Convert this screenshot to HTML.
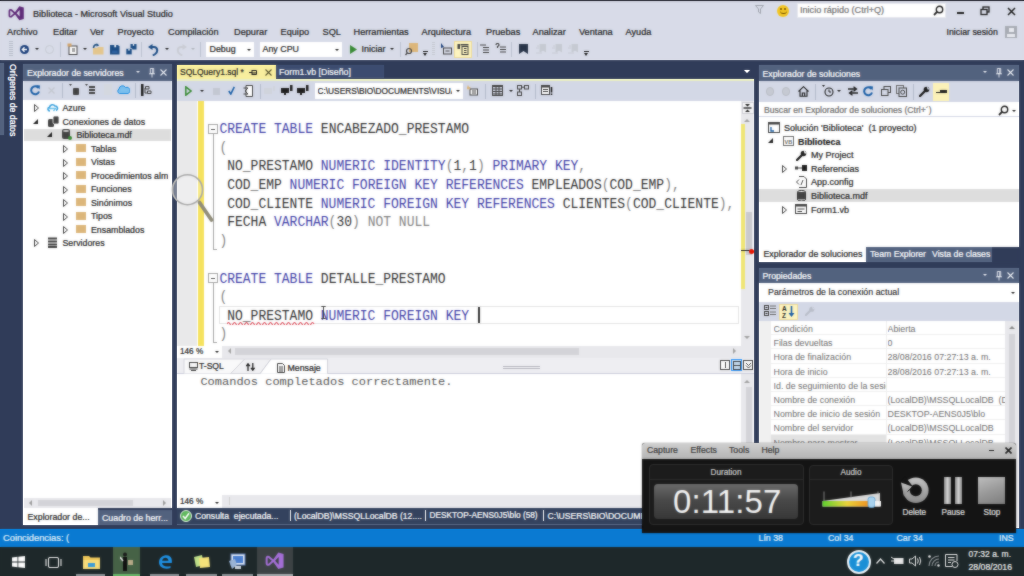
<!DOCTYPE html>
<html><head><meta charset="utf-8">
<style>
*{margin:0;padding:0;box-sizing:border-box}
html,body{width:1024px;height:576px;overflow:hidden;background:#303c59;font-family:"Liberation Sans",sans-serif}
.a{position:absolute}
#top{left:0;top:0;width:1024px;height:60px;background:#d8dbe8}
#topline{left:0;top:0;width:1024px;height:1.2px;background:#1c1c26}
#status{left:0;top:528px;width:1024px;height:19px;background:#007acc}
#taskbar{left:0;top:547px;width:1024px;height:29px;background:#1e272c}
#lefttab{left:3px;top:64px;width:16px;height:150px;background:#364e6f}
#srv{left:23px;top:64px;width:149px;height:461px;background:#fff}
#srvhdr{left:23px;top:64px;width:149px;height:16px;background:#53627f}
#srvtb{left:23px;top:80px;width:149px;height:20px;background:#d3d8e6}
#tab1{left:177px;top:65px;width:99px;height:14px;background:#fff29d}
#tab2{left:276px;top:65px;width:76px;height:14px;background:#364e6f}
#edline{left:177px;top:79px;width:577px;height:2px;background:#fff29d}
#edtb{left:177px;top:81px;width:577px;height:20px;background:#d3d8e6}
#ed{left:177px;top:101px;width:577px;height:426px;background:#fff}
#sol{left:759px;top:65px;width:261px;height:198px;background:#fff}
#prop{left:759px;top:267px;width:261px;height:260px;background:#f5f5f5}
.t{white-space:pre;line-height:1;-webkit-text-stroke:0.2px currentColor}
.menu{top:28px;font-size:9.2px;color:#1e1e1e}
.dd{position:absolute;width:0;height:0;border-style:solid;border-width:2.6px 2.6px 0;border-color:#1e1e1e transparent transparent}
.sep{top:42px;width:1px;height:15px;background:#bcc2cf}
.row{font-size:8.8px;color:#1e1e1e;margin-top:0.7px}
.trd{position:absolute;width:0;height:0;border-style:solid;border-width:0 0 5px 5px;border-color:transparent transparent #1e1e1e transparent}
.fold{position:absolute;left:76px;width:10px;height:8px;background:#dcb67a}
.code{font-family:"Liberation Mono",monospace;font-size:13px;line-height:15px;color:#303030;white-space:pre;transform:scaleY(1.08);transform-origin:0 11px;margin-top:1.3px}
.kw{color:#3e3ea6}
.gr{color:#808080}
.fb{position:absolute;width:10px;height:9.5px;border:1px solid #a5a5a5;background:#fff}
.fb::after{content:"";position:absolute;left:2px;top:3.5px;width:4px;height:1.2px;background:#555}
.mono2{font-family:"Liberation Mono",monospace;font-size:12px;line-height:14px;color:#555;white-space:pre;transform:scaleY(0.87);transform-origin:0 11px}
.qs{font-size:8.65px;color:#fff;margin-top:1px}
.pr{height:14.2px;border-bottom:1px solid #f0f0f0;position:relative;white-space:pre;font-size:8.85px;color:#6d6d6d;line-height:13px}
.pr span:first-child{position:absolute;left:3px;top:2px;width:112px;overflow:hidden}
.pr span:last-child{position:absolute;left:117px;top:2px;width:117px;overflow:hidden}
.sb{top:533.5px;font-size:8.8px;color:#e6f2fa}
.cm{top:446px;font-size:8.7px;color:#3a3a3a}
.cl{top:508.5px;font-size:8.2px;color:#e0e0e0}
</style></head><body><div id="wrap" style="position:absolute;left:0;top:0;width:1024px;height:576px;overflow:hidden">
<div class="a" id="top"></div>
<div class="a" id="topline"></div>
<!-- TITLE BAR -->
<svg class="a" style="left:8px;top:6px" width="17" height="15" viewBox="0 0 17 15"><path d="M7 7.3 L3.3 4 Q1.4 3.4 1.4 5.2 V9.4 Q1.4 11.2 3.3 10.6 Z" fill="none" stroke="#5f2a78" stroke-width="1.7" stroke-linejoin="round"/><path d="M6.2 7.3 L11.3 0.3 L15.8 1.6 V13 L11.3 14.3 Z M11.6 4 L8.6 7.3 L11.6 10.6 Z" fill="#5f2a78" fill-rule="evenodd"/></svg>
<div class="a t" style="left:33px;top:9.5px;font-size:9.1px;color:#1e1e1e">Biblioteca - Microsoft Visual Studio</div>
<svg class="a" style="left:755px;top:5px" width="9" height="9" viewBox="0 0 9 9"><path d="M0.5 0.5 H8.5 L5.5 4 V8.5 L3.5 7 V4 Z" fill="none" stroke="#a0a4ad" stroke-width="1"/></svg>
<div class="a" style="left:777px;top:5px;width:12px;height:12px;border-radius:6px;background:#f3c623"></div>
<div class="a" style="left:780px;top:8px;width:2px;height:2px;background:#6b4b00;border-radius:1px"></div>
<div class="a" style="left:784px;top:8px;width:2px;height:2px;background:#6b4b00;border-radius:1px"></div>
<div class="a" style="left:779.5px;top:9px;width:7px;height:5px;border-bottom:1.3px solid #6b4b00;border-radius:0 0 4px 4px"></div>
<div class="a" style="left:797px;top:3px;width:149px;height:15px;background:#fff;border:1px solid #e6e8ee"></div>
<div class="a t" style="left:800px;top:6px;font-size:9.1px;color:#717171">Inicio rápido (Ctrl+Q)</div>
<svg class="a" style="left:933px;top:5px" width="11" height="11" viewBox="0 0 11 11"><circle cx="6.5" cy="4.5" r="3.2" fill="none" stroke="#1e1e1e" stroke-width="1.4"/><path d="M4.3 6.7 L1 10" stroke="#1e1e1e" stroke-width="1.8"/></svg>
<div class="a" style="left:957px;top:12px;width:7px;height:2px;background:#1e1e1e"></div>
<svg class="a" style="left:980px;top:6px" width="10" height="10" viewBox="0 0 10 10"><rect x="3" y="1" width="6" height="5" fill="none" stroke="#1e1e1e" stroke-width="1.3"/><rect x="1" y="3.5" width="6" height="5" fill="#d8dbe8" stroke="#1e1e1e" stroke-width="1.3"/></svg>
<svg class="a" style="left:1007px;top:7px" width="9" height="9" viewBox="0 0 9 9"><path d="M1 1 L8 8 M8 1 L1 8" stroke="#1e1e1e" stroke-width="1.5"/></svg>
<!-- MENU -->
<div class="a t menu" style="left:7px">Archivo</div>
<div class="a t menu" style="left:53px">Editar</div>
<div class="a t menu" style="left:90px">Ver</div>
<div class="a t menu" style="left:117.5px">Proyecto</div>
<div class="a t menu" style="left:168px">Compilación</div>
<div class="a t menu" style="left:234px">Depurar</div>
<div class="a t menu" style="left:280.5px">Equipo</div>
<div class="a t menu" style="left:322.5px">SQL</div>
<div class="a t menu" style="left:353.5px">Herramientas</div>
<div class="a t menu" style="left:421.5px">Arquitectura</div>
<div class="a t menu" style="left:486px">Pruebas</div>
<div class="a t menu" style="left:532.5px">Analizar</div>
<div class="a t menu" style="left:579px">Ventana</div>
<div class="a t menu" style="left:625.5px">Ayuda</div>
<div class="a t" style="left:946.5px;top:28px;font-size:8.8px;color:#1e1e1e">Iniciar sesión</div>
<div class="a" style="left:1005px;top:26px;width:12px;height:12px;background:#a7abb3"></div>
<div class="a" style="left:1008.5px;top:27.5px;width:5px;height:4.5px;background:#e8eaef"></div>
<div class="a" style="left:1007px;top:33.5px;width:8px;height:3.5px;background:#e8eaef"></div>
<!-- TOOLBAR -->
<div class="a" style="left:9px;top:41px;width:4px;height:15px;background:repeating-linear-gradient(#b9bfcc 0 1px,transparent 1px 2px)"></div>
<div class="a" style="left:19.5px;top:44.5px;width:9.5px;height:9.5px;border-radius:5px;background:#1b3f7a"></div>
<svg class="a" style="left:20px;top:45px" width="9" height="9" viewBox="0 0 9 9"><path d="M7 4.5 H2.5 M4.5 2.3 L2.3 4.5 L4.5 6.7" stroke="#fff" stroke-width="1.3" fill="none"/></svg>
<div class="a dd" style="left:35px;top:48px"></div>
<div class="a" style="left:45px;top:44.5px;width:9px;height:9px;border-radius:5px;border:1.5px solid #c6cad2"></div>
<div class="a sep" style="left:60px"></div>
<svg class="a" style="left:67px;top:43px" width="11" height="12" viewBox="0 0 11 12"><rect x="2" y="3" width="8" height="8.5" fill="#fff" stroke="#424242" stroke-width="1"/><rect x="0.5" y="0.5" width="4" height="3" fill="#d2a36a"/><path d="M5 6 H8 M5 8 H8" stroke="#424242"/></svg>
<div class="a dd" style="left:83px;top:48px"></div>
<svg class="a" style="left:92px;top:43px" width="13" height="13" viewBox="0 0 13 13"><path d="M1 5 H5 L6 4 H11.5 V11.5 H1 Z" fill="#e3c58c"/><path d="M1.5 5 C1.5 2 4 0.8 6 2.2" stroke="#1f4f7f" stroke-width="1.6" fill="none"/><path d="M4.8 0.3 L7.2 2.6 L4.5 3.6 Z" fill="#1f4f7f"/></svg>
<svg class="a" style="left:110px;top:44.5px" width="9.5" height="10" viewBox="0 0 9.5 10"><path d="M0 0 H8 L9.5 1.5 V9.5 H0 Z" fill="#1b4c84"/><rect x="4.3" y="0" width="1.8" height="2.3" fill="#e8eef6"/><rect x="2" y="5.5" width="5.5" height="2.5" fill="#2f62a0"/></svg>
<svg class="a" style="left:126px;top:44px" width="11" height="11" viewBox="0 0 11 11"><path d="M4.5 0 H10.5 V5.5 H4.5 Z" fill="#1b4c84"/><rect x="6.8" y="0" width="1.4" height="1.8" fill="#e8eef6"/><path d="M0 4.5 H6 V10.7 H0 Z" fill="#1b4c84" stroke="#d8dbe8" stroke-width="0.6"/><rect x="2.3" y="4.8" width="1.4" height="1.8" fill="#e8eef6"/></svg>
<div class="a sep" style="left:141px"></div>
<svg class="a" style="left:148px;top:43.5px" width="11" height="12" viewBox="0 0 11 12"><path d="M0 3 L4.5 0 V6 Z" fill="#1b4c84"/><path d="M4 3 H6 C9.8 3 10.2 8 7.2 10 L4.8 11.5" stroke="#1b4c84" stroke-width="2" fill="none"/></svg>
<div class="a dd" style="left:165px;top:48px"></div>
<svg class="a" style="left:175.5px;top:43.5px" width="11" height="12" viewBox="0 0 11 12"><path d="M11 3 L6.5 0 V6 Z" fill="#c9ccd4"/><path d="M7 3 H5 C1.2 3 0.8 8 3.8 10 L6.2 11.5" stroke="#c9ccd4" stroke-width="2" fill="none"/></svg>
<div class="a dd" style="left:191px;top:48px;border-top-color:#b0b4bc"></div>
<div class="a sep" style="left:200px"></div>
<div class="a" style="left:206px;top:42px;width:48px;height:15px;background:#fff"></div>
<div class="a t" style="left:209.5px;top:44.5px;font-size:8.9px;color:#1e1e1e">Debug</div>
<div class="a dd" style="left:247px;top:49px"></div>
<div class="a" style="left:260px;top:42px;width:82px;height:15px;background:#fff"></div>
<div class="a t" style="left:262.5px;top:44.5px;font-size:8.9px;color:#1e1e1e">Any CPU</div>
<div class="a dd" style="left:335px;top:49px"></div>
<svg class="a" style="left:350px;top:44.5px" width="7" height="9" viewBox="0 0 7 9"><path d="M0 0 L7 4.5 L0 9 Z" fill="#388a34"/></svg>
<div class="a t" style="left:361.5px;top:44.5px;font-size:9px;color:#1e1e1e">Iniciar</div>
<div class="a dd" style="left:390px;top:48px"></div>
<div class="a sep" style="left:400px"></div>
<svg class="a" style="left:405px;top:43px" width="13" height="13" viewBox="0 0 13 13"><rect x="4" y="0" width="9" height="9" fill="#dcb67a"/><circle cx="4" cy="8" r="2.5" fill="none" stroke="#424242" stroke-width="1.2"/><path d="M2.3 9.8 L0.5 12" stroke="#424242" stroke-width="1.3"/></svg>
<div class="a" style="left:423px;top:51px;width:5px;height:1px;background:#1e1e1e"></div>
<div class="a dd" style="left:423px;top:53px;border-width:3px 2.5px 0"></div>
<div class="a" style="left:432px;top:42px;width:3px;height:14px;background:repeating-linear-gradient(#c6cad2 0 1px,transparent 1px 2px)"></div>
<svg class="a" style="left:440px;top:43px" width="12" height="12" viewBox="0 0 12 12"><path d="M1 0 L4 4 L1 5 Z" fill="#1b3f7a"/><rect x="3.5" y="5" width="8" height="6" fill="none" stroke="#424242"/><path d="M5.5 8 H9.5" stroke="#424242"/></svg>
<div class="a" style="left:454px;top:40.5px;width:18px;height:17px;background:#fdf4bf;border:1px solid #eedc9a"></div>
<svg class="a" style="left:457px;top:43px" width="12" height="12" viewBox="0 0 12 12"><rect x="0.5" y="1" width="2.5" height="5" fill="#424242"/><rect x="3.5" y="1" width="8" height="1.5" fill="#424242"/><rect x="5" y="3.5" width="6" height="8" fill="none" stroke="#424242"/><path d="M7 5.5 H9.5 M7 7.5 H9.5 M7 9.5 H9.5" stroke="#424242"/></svg>
<div class="a sep" style="left:477px"></div>
<svg class="a" style="left:480px;top:44px" width="10" height="10" viewBox="0 0 10 10"><path d="M0 1 H6 M3 3.5 H9 M3 6 H9 M3 8.5 H9" stroke="#424242" stroke-width="1"/></svg>
<svg class="a" style="left:495px;top:43px" width="12" height="11" viewBox="0 0 12 11"><path d="M1 2 Q1 0.5 2.5 0.5 Q4 0.5 4 2 Q4 3 2.5 3.5 V5" stroke="#424242" stroke-width="1.2" fill="none"/><path d="M5 4 H11 M5 6.5 H11 M5 9 H11" stroke="#424242"/></svg>
<div class="a sep" style="left:511px"></div>
<svg class="a" style="left:518.5px;top:43.5px" width="9" height="10" viewBox="0 0 9 10"><path d="M0 0 H9 V10 L4.5 7 L0 10 Z" fill="#283448"/></svg>
<svg class="a" style="left:536px;top:43.5px" width="10" height="11" viewBox="0 0 10 11"><path d="M4 0 H10 V8 L7 6 L4 8 Z M0 4 H3 M1 2 H3 M0 9 H6" stroke="#c6cad2" fill="#c6cad2"/></svg>
<svg class="a" style="left:552px;top:43.5px" width="10" height="11" viewBox="0 0 10 11"><path d="M4 0 H10 V8 L7 6 L4 8 Z M0 4 H3 M1 2 H3 M0 9 H6" stroke="#c6cad2" fill="#c6cad2"/></svg>
<svg class="a" style="left:568px;top:43.5px" width="10" height="11" viewBox="0 0 10 11"><path d="M4 0 H10 V8 L7 6 L4 8 Z M0 4 H3 M1 2 H3 M0 9 H6" stroke="#c6cad2" fill="#c6cad2"/></svg>
<div class="a" style="left:584px;top:51px;width:5px;height:1px;background:#1e1e1e"></div>
<div class="a dd" style="left:584px;top:53px;border-width:3px 2.5px 0"></div>

<!-- LEFT TAB -->
<div class="a" style="left:0;top:63px;width:4px;height:72px;background:#53627f"></div>
<div class="a t" style="left:17px;top:64px;font-size:8.8px;color:#e8ebf2;transform-origin:0 0;transform:rotate(90deg)">Orígenes de datos</div>
<!-- SERVER EXPLORER -->
<div class="a" style="left:23px;top:64px;width:148.7px;height:461px;background:#fff"></div>
<div class="a" style="left:23px;top:64px;width:149px;height:16.5px;background:#53627f"></div>
<div class="a t" style="left:27px;top:69px;font-size:8.7px;color:#fff">Explorador de servidores</div>
<div class="a dd" style="left:136px;top:71px;border-top-color:#e9ecf2;border-width:2.6px 2.6px 0"></div>
<svg class="a" style="left:148.5px;top:68px" width="6" height="10" viewBox="0 0 6 10"><path d="M1.3 0.5 H4.7 V5.5 H1.3 Z M0 5.8 H6 M3 5.8 V9.5" stroke="#e9ecf2" fill="none" stroke-width="0.9"/><path d="M3.4 1 V5" stroke="#e9ecf2" stroke-width="0.8"/></svg>
<svg class="a" style="left:160px;top:69px" width="7" height="7" viewBox="0 0 7 7"><path d="M0.5 0.5 L6.5 6.5 M6.5 0.5 L0.5 6.5" stroke="#e9ecf2" stroke-width="1.1"/></svg>
<div class="a" style="left:23px;top:80.5px;width:148.7px;height:19.5px;background:#d3d8e6"></div>
<svg class="a" style="left:30px;top:84px" width="11" height="12" viewBox="0 0 11 12"><path d="M8.5 4 A4 4 0 1 0 9 7.5" stroke="#1b5fa6" stroke-width="2" fill="none"/><path d="M6 1 L10 1.5 L9.5 5.5 Z" fill="#1b5fa6"/></svg>
<svg class="a" style="left:48px;top:87px" width="7" height="7" viewBox="0 0 7 7"><path d="M0.5 0.5 L6.5 6.5 M6.5 0.5 L0.5 6.5" stroke="#c3c7cf" stroke-width="1.3"/></svg>
<div class="a" style="left:62px;top:83px;width:1px;height:15px;background:#b4bbcb"></div>
<svg class="a" style="left:69px;top:84px" width="11" height="11" viewBox="0 0 11 11"><path d="M0 0 H3 L1.5 2 Z" fill="#424242"/><rect x="4" y="4" width="6" height="7" rx="1" fill="#424242"/></svg>
<svg class="a" style="left:85px;top:84px" width="11" height="11" viewBox="0 0 11 11"><path d="M0 0 H3 L1.5 2 Z" fill="#424242"/><path d="M4 3 H10 M4 6 H10 M4 9 H10" stroke="#424242" stroke-width="2"/></svg>
<svg class="a" style="left:104px;top:84px" width="8" height="11" viewBox="0 0 8 11"><rect x="0" y="0" width="8" height="11" fill="#d4d8df"/></svg>
<svg class="a" style="left:117px;top:85px" width="13" height="9" viewBox="0 0 13 9"><path d="M2.5 8.5 A2.5 2.5 0 0 1 2 4 A3.5 3.5 0 0 1 8.5 2.5 A3 3 0 0 1 11 8.5 Z" fill="#7cc0ee" stroke="#1b8be0" stroke-width="1"/></svg>
<div class="a" style="left:134.5px;top:83px;width:1px;height:15px;background:#b4bbcb"></div>
<svg class="a" style="left:141px;top:84px" width="11" height="12" viewBox="0 0 11 12"><rect x="0" y="0" width="2.5" height="12" fill="#1e1e1e"/><path d="M4.5 2.5 H8 V5 H4.5 Z M6.5 7 H10 V9.5 H6.5 Z M4 4 V9 H6.5" stroke="#424242" fill="none"/></svg>
<!-- tree -->
<svg class="a" style="left:34px;top:104px" width="5" height="8" viewBox="0 0 5 8"><path d="M0.5 0.5 L4.5 4 L0.5 7.5 Z" fill="none" stroke="#424242" stroke-width="1"/></svg>
<svg class="a" style="left:47px;top:103px" width="12" height="9" viewBox="0 0 12 9"><path d="M3 8 C0.5 8 0.3 4.8 2.5 4.3 C3 1.5 6.5 0.8 8 3 C10.5 2.8 11.5 6.5 9 7.5" fill="none" stroke="#3aa0dc" stroke-width="1.6"/><path d="M1.5 5.5 H8.5 L6.5 8.2" fill="none" stroke="#6cc0ea" stroke-width="1.3"/></svg>
<div class="a t row" style="left:62.5px;top:103px">Azure</div>
<div class="a trd" style="left:33px;top:118.5px"></div>
<svg class="a" style="left:48px;top:116px" width="11" height="11" viewBox="0 0 11 11"><rect x="0" y="3" width="6" height="8" rx="1.5" fill="#424242"/><rect x="5" y="0" width="6" height="8" rx="1.5" fill="#424242" stroke="#fff" stroke-width="0.8"/></svg>
<div class="a t row" style="left:62.5px;top:117px">Conexiones de datos</div>
<div class="a" style="left:24px;top:128.5px;width:147px;height:12px;background:#dddddd"></div>
<div class="a trd" style="left:47px;top:132px"></div>
<svg class="a" style="left:62px;top:129px" width="10" height="11" viewBox="0 0 10 11"><rect x="0" y="0" width="8" height="10" rx="2" fill="#424242"/><ellipse cx="4" cy="2" rx="3" ry="1" fill="#ccc"/><circle cx="8" cy="9" r="2" fill="#388a34"/></svg>
<div class="a t row" style="left:76.5px;top:130px">Biblioteca.mdf</div>
<svg class="a" style="left:62.5px;top:145px" width="5" height="8" viewBox="0 0 5 8"><path d="M0.5 0.5 L4.5 4 L0.5 7.5 Z" fill="none" stroke="#424242" stroke-width="1"/></svg><div class="a fold" style="top:144px"></div><div class="a t row" style="left:91px;top:144px">Tablas</div>
<svg class="a" style="left:62.5px;top:158.5px" width="5" height="8" viewBox="0 0 5 8"><path d="M0.5 0.5 L4.5 4 L0.5 7.5 Z" fill="none" stroke="#424242" stroke-width="1"/></svg><div class="a fold" style="top:157.5px"></div><div class="a t row" style="left:91px;top:157.5px">Vistas</div>
<svg class="a" style="left:62.5px;top:172px" width="5" height="8" viewBox="0 0 5 8"><path d="M0.5 0.5 L4.5 4 L0.5 7.5 Z" fill="none" stroke="#424242" stroke-width="1"/></svg><div class="a fold" style="top:171px"></div><div class="a t row" style="left:91px;top:171px;width:77px;overflow:hidden">Procedimientos almacenados</div>
<svg class="a" style="left:62.5px;top:185.5px" width="5" height="8" viewBox="0 0 5 8"><path d="M0.5 0.5 L4.5 4 L0.5 7.5 Z" fill="none" stroke="#424242" stroke-width="1"/></svg><div class="a fold" style="top:184.5px"></div><div class="a t row" style="left:91px;top:184.5px">Funciones</div>
<svg class="a" style="left:62.5px;top:199px" width="5" height="8" viewBox="0 0 5 8"><path d="M0.5 0.5 L4.5 4 L0.5 7.5 Z" fill="none" stroke="#424242" stroke-width="1"/></svg><div class="a fold" style="top:198px"></div><div class="a t row" style="left:91px;top:198px">Sinónimos</div>
<svg class="a" style="left:62.5px;top:212.5px" width="5" height="8" viewBox="0 0 5 8"><path d="M0.5 0.5 L4.5 4 L0.5 7.5 Z" fill="none" stroke="#424242" stroke-width="1"/></svg><div class="a fold" style="top:211.5px"></div><div class="a t row" style="left:91px;top:211.5px">Tipos</div>
<svg class="a" style="left:62.5px;top:226px" width="5" height="8" viewBox="0 0 5 8"><path d="M0.5 0.5 L4.5 4 L0.5 7.5 Z" fill="none" stroke="#424242" stroke-width="1"/></svg><div class="a fold" style="top:225px"></div><div class="a t row" style="left:91px;top:225px">Ensamblados</div>
<svg class="a" style="left:34px;top:239px" width="5" height="8" viewBox="0 0 5 8"><path d="M0.5 0.5 L4.5 4 L0.5 7.5 Z" fill="none" stroke="#424242" stroke-width="1"/></svg>
<svg class="a" style="left:48px;top:237px" width="9" height="11" viewBox="0 0 9 11"><path d="M0 1.5 H9 M0 4.5 H9 M0 7.5 H9 M0 10 H9" stroke="#424242" stroke-width="2"/></svg>
<div class="a t row" style="left:62.5px;top:238px">Servidores</div>
<!-- h scrollbar -->
<div class="a" style="left:24px;top:498px;width:147px;height:10px;background:#e8e8ec"></div>
<div class="a" style="left:38px;top:500px;width:95px;height:6px;background:#d3d3d8"></div>
<div class="a" style="left:29px;top:500px;width:0;height:0;border-style:solid;border-width:3px 3px 3px 0;border-color:transparent #9a9a9a transparent transparent"></div>
<div class="a" style="left:163px;top:500px;width:0;height:0;border-style:solid;border-width:3px 0 3px 3px;border-color:transparent transparent transparent #9a9a9a"></div>
<!-- bottom tabs -->
<div class="a" style="left:23px;top:508px;width:149px;height:17px;background:#303c59"></div>
<div class="a" style="left:23px;top:508px;width:75px;height:17px;background:#fff"></div>
<div class="a t" style="left:27.5px;top:513px;font-size:8.8px;color:#1e1e1e">Explorador de...</div>
<div class="a" style="left:98px;top:509.5px;width:74px;height:15.5px;background:#53627f"></div>
<div class="a t" style="left:102px;top:513.5px;font-size:8.8px;color:#fff">Cuadro de herr...</div>

<!-- DOC TABS -->
<div class="a" style="left:177px;top:64.5px;width:99px;height:14.5px;background:#f8ee9e"></div>
<div class="a t" style="left:180px;top:67.5px;font-size:8.5px;color:#1e1e1e">SQLQuery1.sql *</div>
<svg class="a" style="left:249px;top:69px" width="9" height="7" viewBox="0 0 9 7"><path d="M0 3.5 H3 M3 1 V6 M3 1.5 H7.5 V5.5 H3 M3 4 H7.5" stroke="#1e1e1e" fill="none" stroke-width="1"/></svg>
<svg class="a" style="left:265px;top:68.5px" width="7" height="7" viewBox="0 0 7 7"><path d="M0.5 0.5 L6.5 6.5 M6.5 0.5 L0.5 6.5" stroke="#5a5630" stroke-width="1.1"/></svg>
<div class="a" style="left:276px;top:64.5px;width:108px;height:13.5px;background:#3d4d70"></div>
<div class="a t" style="left:279px;top:67.5px;font-size:8.8px;color:#fff">Form1.vb [Diseño]</div>
<div class="a dd" style="left:744px;top:70px;border-top-color:#fff;border-width:3.5px 3.5px 0"></div>
<div class="a" style="left:177px;top:79px;width:577px;height:2px;background:#e9eec3"></div>
<!-- EDITOR TOOLBAR -->
<div class="a" style="left:177px;top:81px;width:577px;height:20px;background:#d3d8e6"></div>
<svg class="a" style="left:185px;top:86px" width="7" height="10" viewBox="0 0 7 10"><path d="M0.8 0.8 L6 5 L0.8 9.2 Z" fill="none" stroke="#388a34" stroke-width="1.5"/></svg>
<div class="a dd" style="left:200px;top:90px"></div>
<div class="a" style="left:213px;top:87.5px;width:7px;height:7px;background:#c3c8d2"></div>
<svg class="a" style="left:228px;top:86px" width="7" height="9" viewBox="0 0 7 9"><path d="M0.8 5 L2.8 8 L6.3 0.8" stroke="#1b5fa6" stroke-width="1.6" fill="none"/></svg>
<svg class="a" style="left:243px;top:85px" width="10" height="12" viewBox="0 0 10 12"><path d="M3 0.5 H9.5 V11.5 H3 Z" fill="#fff" stroke="#424242"/><path d="M0.5 3 L5 3 L2 6 L5 9 H0.5" stroke="#424242" fill="none"/></svg>
<div class="a" style="left:259.5px;top:84px;width:1px;height:15px;background:#b4bbcb"></div>
<svg class="a" style="left:264px;top:86px" width="12" height="10" viewBox="0 0 12 10"><rect x="0" y="2" width="8" height="6" fill="#d0d4dc"/><rect x="9" y="0" width="2" height="5" fill="#d0d4dc"/></svg>
<svg class="a" style="left:281px;top:85px" width="12" height="11" viewBox="0 0 12 11"><rect x="0" y="3" width="8" height="5" fill="#1e1e1e"/><rect x="3" y="8" width="2" height="2" fill="#1e1e1e"/><rect x="9" y="0" width="2.5" height="6" fill="#1e1e1e"/></svg>
<svg class="a" style="left:297px;top:85px" width="12" height="11" viewBox="0 0 12 11"><rect x="0" y="3" width="8" height="5" fill="#1e1e1e"/><rect x="3" y="8" width="2" height="2" fill="#1e1e1e"/><rect x="9" y="0" width="2.5" height="6" fill="#1e1e1e"/></svg>
<div class="a" style="left:315px;top:83px;width:148px;height:16px;background:#fff"></div>
<div class="a t" style="left:317.5px;top:86.5px;font-size:8.3px;color:#1e1e1e;width:134px;overflow:hidden">C:\USERS\BIO\DOCUMENTS\VISUAL</div>
<div class="a dd" style="left:456px;top:90px"></div>
<svg class="a" style="left:467px;top:85px" width="11" height="11" viewBox="0 0 11 11"><rect x="3" y="4" width="7.5" height="6" fill="#fff" stroke="#424242"/><path d="M1 0 L2 2 L4 2 L2.5 3.2 L3 5 L1 4 L-1 5" fill="#dcb67a"/><path d="M5 6 H9 M5 8 H9" stroke="#424242"/></svg>
<div class="a" style="left:485px;top:84px;width:1px;height:15px;background:#b4bbcb"></div>
<svg class="a" style="left:492px;top:85px" width="11" height="11" viewBox="0 0 11 11"><rect x="0.5" y="1.5" width="10" height="9" fill="none" stroke="#424242"/><path d="M0.5 4 H10.5 M0.5 6.5 H10.5 M0.5 9 H10.5 M4 1.5 V10.5 M7 1.5 V10.5" stroke="#424242"/><rect x="0" y="0" width="11" height="2" fill="#424242"/></svg>
<div class="a dd" style="left:509px;top:90px"></div>
<svg class="a" style="left:517px;top:85px" width="12" height="11" viewBox="0 0 12 11"><rect x="0.5" y="0.5" width="4" height="3.5" fill="none" stroke="#424242"/><rect x="7.5" y="0.5" width="4" height="3.5" fill="none" stroke="#424242"/><rect x="0.5" y="7" width="4" height="3.5" fill="none" stroke="#424242"/><path d="M2.5 4 V7 M4.5 2.2 H7.5" stroke="#424242"/></svg>
<div class="a" style="left:534.5px;top:84px;width:1px;height:15px;background:#b4bbcb"></div>
<svg class="a" style="left:541px;top:85px" width="12" height="11" viewBox="0 0 12 11"><rect x="0.5" y="0.5" width="8" height="9" fill="#fff" stroke="#424242"/><rect x="0.5" y="0.5" width="8" height="2" fill="#424242"/><path d="M2 4.5 H7 M2 6.5 H7" stroke="#424242"/><path d="M10.5 2 V7.5 M10.5 8.5 V10" stroke="#1e1e1e" stroke-width="1.6"/></svg>
<!-- EDITOR BODY -->
<div class="a" style="left:177px;top:101px;width:564px;height:244.5px;background:#fff"></div>
<div class="a" style="left:177px;top:101px;width:20px;height:244.5px;background:#e9e9ea"></div>
<div class="a" style="left:198.2px;top:101px;width:6px;height:244.5px;background:#f5e25e"></div>
<!-- fold boxes and outline lines -->
<div class="a fb" style="left:208px;top:124.3px"></div>
<div class="a" style="left:212.5px;top:133.5px;width:1px;height:115.5px;background:#a5a5a5"></div>
<div class="a" style="left:212.5px;top:249px;width:4.5px;height:1px;background:#a5a5a5"></div>
<div class="a fb" style="left:208px;top:273px"></div>
<div class="a" style="left:212.5px;top:282.3px;width:1px;height:60px;background:#a5a5a5"></div>
<div class="a" style="left:212.5px;top:342px;width:4.5px;height:1px;background:#a5a5a5"></div>
<!-- current line box -->
<div class="a" style="left:218.5px;top:305.5px;width:520px;height:18px;border:1px solid #e4e4e4"></div>
<div class="a code" style="left:219.4px;top:121px"><span class="kw">CREATE</span> <span class="kw">TABLE</span> ENCABEZADO_PRESTAMO</div>
<div class="a code" style="left:219.4px;top:139.6px"><span class="gr">(</span></div>
<div class="a code" style="left:219.4px;top:158.2px"> NO_PRESTAMO <span class="kw">NUMERIC</span> <span class="kw">IDENTITY</span><span class="gr">(</span>1<span class="gr">,</span>1<span class="gr">)</span> <span class="kw">PRIMARY</span> <span class="kw">KEY</span><span class="gr">,</span></div>
<div class="a code" style="left:219.4px;top:176.8px"> COD_EMP <span class="kw">NUMERIC</span> <span class="kw">FOREIGN</span> <span class="kw">KEY</span> <span class="kw">REFERENCES</span> EMPLEADOS<span class="gr">(</span>COD_EMP<span class="gr">),</span></div>
<div class="a code" style="left:219.4px;top:195.4px"> COD_CLIENTE <span class="kw">NUMERIC</span> <span class="kw">FOREIGN</span> <span class="kw">KEY</span> <span class="kw">REFERENCES</span> CLIENTES<span class="gr">(</span>COD_CLIENTE<span class="gr">),</span></div>
<div class="a code" style="left:219.4px;top:214px"> FECHA <span class="kw">VARCHAR</span><span class="gr">(</span>30<span class="gr">)</span> <span class="gr">NOT NULL</span></div>
<div class="a code" style="left:219.4px;top:232.6px"><span class="gr">)</span></div>
<div class="a code" style="left:219.4px;top:270.4px"><span class="kw">CREATE</span> <span class="kw">TABLE</span> DETALLE_PRESTAMO</div>
<div class="a code" style="left:219.4px;top:289px"><span class="gr">(</span></div>
<div class="a code" style="left:219.4px;top:307.6px"> NO_PRESTAMO <span class="kw">NUMERIC</span> <span class="kw">FOREIGN</span> <span class="kw">KEY</span></div>
<div class="a code" style="left:219.4px;top:326.2px"><span class="gr">)</span></div>
<svg class="a" style="left:227px;top:321px" width="88" height="4" viewBox="0 0 88 4"><path d="M0 3 Q1.5 0 3 3 T6 3 T9 3 T12 3 T15 3 T18 3 T21 3 T24 3 T27 3 T30 3 T33 3 T36 3 T39 3 T42 3 T45 3 T48 3 T51 3 T54 3 T57 3 T60 3 T63 3 T66 3 T69 3 T72 3 T75 3 T78 3 T81 3 T84 3 T87 3" stroke="#e0505e" stroke-width="1.1" fill="none"/></svg>
<div class="a" style="left:478px;top:307px;width:1.6px;height:15.5px;background:#333"></div>
<svg class="a" style="left:321px;top:306px" width="5" height="13" viewBox="0 0 5 13"><path d="M0.3 0.5 H4.7 M2.5 0.5 V12.5 M0.3 12.5 H4.7" stroke="#333" stroke-width="0.9" fill="none"/></svg>
<!-- magnifier overlay -->
<svg class="a" style="left:170px;top:172px" width="46" height="52" viewBox="0 0 46 52"><circle cx="17.5" cy="17.7" r="15" fill="rgba(255,255,255,0.25)" stroke="#a8a8a8" stroke-width="1.6"/><path d="M29.5 30.5 L41.5 48" stroke="#8f8b78" stroke-width="3.8" stroke-linecap="round"/></svg>
<!-- vertical scrollbar -->
<div class="a" style="left:741px;top:101px;width:13px;height:244.5px;background:#e8e8ec"></div>
<div class="a" style="left:741.5px;top:101.5px;width:12px;height:12px;background:#f5f5f7;border:1px solid #d0d0d6"></div>
<svg class="a" style="left:743px;top:102.5px" width="9" height="10" viewBox="0 0 9 10"><path d="M0.5 5 H8.5" stroke="#222" stroke-width="1.4"/><path d="M2 1 H7 L4.5 3.6 Z M2 9 H7 L4.5 6.4 Z" fill="#222"/></svg>
<div class="a" style="left:744px;top:119px;width:0;height:0;border-style:solid;border-width:0 3.5px 3.5px;border-color:transparent transparent #a0a0a0"></div>
<div class="a" style="left:741px;top:124px;width:3.5px;height:165px;background:#efe574"></div>
<div class="a" style="left:745.5px;top:212px;width:6.5px;height:43px;background:#c9c9ce"></div>
<div class="a" style="left:741px;top:250px;width:10px;height:1.2px;background:#1e1e1e"></div>
<div class="a" style="left:749px;top:248.5px;width:5px;height:5px;border-radius:3px;background:#e51400"></div>
<div class="a" style="left:744px;top:336px;width:0;height:0;border-style:solid;border-width:3.5px 3.5px 0;border-color:#a0a0a0 transparent transparent"></div>
<!-- h scroll row -->
<div class="a" style="left:177px;top:345.5px;width:577px;height:12px;background:#e8e8ec"></div>
<div class="a" style="left:177px;top:345.5px;width:45px;height:12px;background:#fff"></div>
<div class="a t" style="left:180px;top:347.5px;font-size:8.2px;color:#1e1e1e">146 %</div>
<div class="a dd" style="left:215px;top:351px"></div>
<div class="a" style="left:228px;top:348px;width:0;height:0;border-style:solid;border-width:3.5px 3.5px 3.5px 0;border-color:transparent #a0a0a0 transparent transparent"></div>
<div class="a" style="left:234.5px;top:348px;width:344px;height:7px;background:#d3d3d8"></div>
<div class="a" style="left:733px;top:348px;width:0;height:0;border-style:solid;border-width:3.5px 0 3.5px 3.5px;border-color:transparent transparent transparent #a0a0a0"></div>
<!-- results tab strip -->
<div class="a" style="left:177px;top:357.5px;width:577px;height:16.5px;background:#eeeef2"></div>
<div class="a" style="left:177px;top:373px;width:577px;height:1px;background:#cccedb"></div>
<svg class="a" style="left:182px;top:358px" width="150" height="16" viewBox="0 0 150 16"><path d="M2 15.5 V1 H62.75 L48.7 15.5" fill="#f9f9fa" stroke="#d6d6dc"/><path d="M48.7 15.5 L62.75 1 H89 L78 15.5 Z" fill="#f1f1f4" stroke="#d6d6dc"/><path d="M78 15.8 L89 1 H145.6 V15.8" fill="#fff" stroke="#cfd0d8"/></svg>
<svg class="a" style="left:189px;top:362px" width="9" height="9" viewBox="0 0 9 9"><rect x="0.5" y="0.5" width="8" height="5" fill="none" stroke="#424242"/><path d="M0.5 7 H8.5 M2 8.5 H7" stroke="#424242"/></svg>
<div class="a t" style="left:199px;top:361.5px;font-size:8.6px;color:#1e1e1e">T-SQL</div>
<svg class="a" style="left:246px;top:362.5px" width="9" height="8" viewBox="0 0 9 8"><path d="M2 8 V1.2 M0.2 3.2 L2 0.8 L3.8 3.2 M6.8 0 V6.8 M5 4.8 L6.8 7.2 L8.6 4.8" stroke="#1e1e1e" stroke-width="1.3" fill="none"/></svg>
<svg class="a" style="left:276.5px;top:363px" width="8" height="10" viewBox="0 0 8 10"><path d="M0.5 0.5 H5.5 L7.5 2.5 V9.5 H0.5 Z" fill="#fff" stroke="#424242"/><path d="M2 4 H6 M2 6 H6 M2 8 H6" stroke="#424242"/></svg>
<div class="a t" style="left:287.5px;top:364px;font-size:8.8px;color:#1e1e1e">Mensaje</div>
<div class="a" style="left:503px;top:365.5px;width:37px;height:1px;background:#b8b8c0"></div>
<div class="a" style="left:503px;top:368px;width:37px;height:1px;background:#b8b8c0"></div>
<div class="a" style="left:720px;top:360px;width:10px;height:10px;border:1px solid #424242;background:#fff"></div>
<div class="a" style="left:724.5px;top:362px;width:1px;height:6px;background:#424242"></div>
<div class="a" style="left:731px;top:359px;width:11px;height:12px;background:#c5dcf0;border:1px solid #3399ff"></div>
<div class="a" style="left:732.5px;top:360.5px;width:8px;height:9px;border:1px solid #424242"></div>
<div class="a" style="left:733.5px;top:364.5px;width:6px;height:1px;background:#424242"></div>
<div class="a" style="left:743px;top:360px;width:10px;height:10px;border:1px solid #424242;background:#fff"></div>
<svg class="a" style="left:744.5px;top:361.5px" width="7" height="7" viewBox="0 0 7 7"><path d="M1 1 L3.5 3.5 L6 1 M1 3.5 L3.5 6 L6 3.5" stroke="#424242" fill="none"/></svg>
<!-- results body -->
<div class="a" style="left:177px;top:374px;width:577px;height:121px;background:#fff"></div>
<div class="a mono2" style="left:200.4px;top:374.5px">Comandos completados correctamente.</div>
<div class="a" style="left:741px;top:374px;width:13px;height:121px;background:#e8e8ec"></div>
<div class="a" style="left:744px;top:380px;width:0;height:0;border-style:solid;border-width:0 3.5px 3.5px;border-color:transparent transparent #a0a0a0"></div>
<div class="a" style="left:745.5px;top:387px;width:6.5px;height:100px;background:#d3d3d8"></div>
<!-- bottom zoom row -->
<div class="a" style="left:177px;top:495px;width:577px;height:12.5px;background:#e8e8ec"></div>
<div class="a" style="left:177px;top:495px;width:45px;height:12.5px;background:#fff"></div>
<div class="a t" style="left:180px;top:497.5px;font-size:8.2px;color:#1e1e1e">146 %</div>
<div class="a dd" style="left:215px;top:501.5px;border-width:2.5px 2.5px 0"></div>
<div class="a" style="left:229px;top:497px;width:1px;height:8px;background:#d0d0d0"></div>
<!-- query status strip -->
<div class="a" style="left:177px;top:507.5px;width:577px;height:16.5px;background:#34435f"></div>
<div class="a" style="left:179.5px;top:509.5px;width:12.5px;height:12.5px;border-radius:7px;background:#5fb85c;border:1px solid #e6f2e5"></div>
<svg class="a" style="left:182px;top:512px" width="8" height="8" viewBox="0 0 8 8"><path d="M1 4 L3.2 6.5 L7 1.2" stroke="#fff" stroke-width="1.5" fill="none"/></svg>
<div class="a t qs" style="left:195px;top:511px">Consulta  ejecutada...</div>
<div class="a" style="left:289.5px;top:510px;width:1.2px;height:11px;background:#fff"></div>
<div class="a t qs" style="left:294px;top:511px">(LocalDB)\MSSQLLocalDB (12....</div>
<div class="a" style="left:425px;top:510px;width:1.2px;height:11px;background:#fff"></div>
<div class="a t qs" style="left:429.5px;top:511px;font-size:8.25px">DESKTOP-AENS0J5\blo (58)</div>
<div class="a" style="left:543px;top:510px;width:1.2px;height:11px;background:#fff"></div>
<div class="a t qs" style="left:547.5px;top:511px">C:\USERS\BIO\DOCUMENTS\VISUAL</div>
<div class="a" style="left:177px;top:524px;width:577px;height:1px;background:#53627f"></div>

<!-- SOLUTION EXPLORER -->
<div class="a" style="left:759px;top:64.7px;width:260px;height:197px;background:#fff"></div>
<div class="a" style="left:759px;top:64.7px;width:260px;height:16.3px;background:#53627f"></div>
<div class="a t" style="left:762.5px;top:69.5px;font-size:8.7px;color:#fff">Explorador de soluciones</div>
<div class="a dd" style="left:983.2px;top:71px;border-top-color:#e9ecf2;border-width:2.6px 2.6px 0"></div>
<svg class="a" style="left:995.5px;top:68px" width="6" height="10" viewBox="0 0 6 10"><path d="M1.3 0.5 H4.7 V5.5 H1.3 Z M0 5.8 H6 M3 5.8 V9.5" stroke="#e9ecf2" fill="none" stroke-width="0.9"/><path d="M3.4 1 V5" stroke="#e9ecf2" stroke-width="0.8"/></svg>
<svg class="a" style="left:1007px;top:69px" width="7" height="7" viewBox="0 0 7 7"><path d="M0.5 0.5 L6.5 6.5 M6.5 0.5 L0.5 6.5" stroke="#e9ecf2" stroke-width="1.1"/></svg>
<div class="a" style="left:759px;top:81px;width:260px;height:21px;background:#d3d8e6"></div>
<div class="a" style="left:765.5px;top:87px;width:8.5px;height:8.5px;border-radius:5px;background:#c6cad3;border:1.5px solid #b9bdc6"></div>
<div class="a" style="left:781.5px;top:87px;width:8.5px;height:8.5px;border-radius:5px;background:#c6cad3;border:1.5px solid #b9bdc6"></div>
<svg class="a" style="left:797.5px;top:85.5px" width="11" height="11" viewBox="0 0 11 11"><path d="M0.5 5.5 L5.5 0.7 L10.5 5.5 M2 4.5 V10.3 H9 V4.5 M4.3 10.3 V7 H6.7 V10.3" stroke="#1e1e1e" stroke-width="1.1" fill="none"/></svg>
<div class="a" style="left:814.5px;top:84px;width:1px;height:16px;background:#b4bbcb"></div>
<svg class="a" style="left:822px;top:85px" width="12" height="12" viewBox="0 0 12 12"><path d="M0 0 H3 L1.5 2 Z" fill="#1e1e1e"/><circle cx="7" cy="7" r="4" fill="none" stroke="#1e1e1e" stroke-width="1.1"/><path d="M7 4.5 V7 H9" stroke="#1e1e1e" fill="none"/></svg>
<div class="a dd" style="left:837px;top:90px"></div>
<svg class="a" style="left:847.5px;top:86px" width="10" height="10" viewBox="0 0 10 10"><path d="M0 3 H8 M5.5 0.8 L8.5 3 L5.5 5.2 M10 7 H2 M4.5 4.8 L1.5 7 L4.5 9.2" stroke="#1e1e1e" stroke-width="1.3" fill="none"/></svg>
<svg class="a" style="left:862.5px;top:85px" width="11" height="12" viewBox="0 0 11 12"><path d="M8.5 4 A4 4 0 1 0 9 7.5" stroke="#1b5fa6" stroke-width="2" fill="none"/><path d="M6 1 L10 1.5 L9.5 5.5 Z" fill="#1b5fa6"/></svg>
<svg class="a" style="left:880.5px;top:86px" width="10" height="10" viewBox="0 0 10 10"><rect x="3" y="0.5" width="6.5" height="6" fill="none" stroke="#424242"/><rect x="0.5" y="3.5" width="6.5" height="6" fill="#d3d8e6" stroke="#424242"/></svg>
<svg class="a" style="left:896px;top:85px" width="11" height="12" viewBox="0 0 11 12"><rect x="0.5" y="0.5" width="7" height="8" fill="none" stroke="#6b6b6b"/><rect x="3" y="3" width="7.5" height="8.5" fill="#d3d8e6" stroke="#424242"/><circle cx="6.7" cy="7.2" r="2" fill="none" stroke="#424242"/></svg>
<div class="a" style="left:913px;top:84px;width:1px;height:16px;background:#b4bbcb"></div>
<svg class="a" style="left:919px;top:85.5px" width="11" height="11" viewBox="0 0 11 11"><path d="M1 10 L6 5" stroke="#1e1e1e" stroke-width="2.4" stroke-linecap="round"/><circle cx="7.5" cy="3.5" r="2.8" fill="#1e1e1e"/><path d="M7.5 0 L11 3.5 L8.5 3.5 Z" fill="#d3d8e6"/></svg>
<div class="a" style="left:933px;top:83px;width:16px;height:18px;background:#fbf1b8"></div>
<div class="a" style="left:935.5px;top:91.5px;width:11px;height:1.2px;background:#1e1e1e"></div>
<div class="a" style="left:940px;top:89.5px;width:6.5px;height:3.5px;background:#1e1e1e"></div>
<div class="a" style="left:759px;top:102px;width:260px;height:15px;background:#fff;border-bottom:1px solid #d3d8e6"></div>
<div class="a t" style="left:764px;top:105.5px;font-size:8.65px;color:#6d6d6d">Buscar en Explorador de soluciones (Ctrl+´)</div>
<svg class="a" style="left:998px;top:104.5px" width="11" height="11" viewBox="0 0 11 11"><circle cx="6.5" cy="4.5" r="3.2" fill="none" stroke="#1e1e1e" stroke-width="1.4"/><path d="M4.3 6.7 L1 10" stroke="#1e1e1e" stroke-width="1.8"/></svg>
<div class="a dd" style="left:1012px;top:110px"></div>
<!-- tree -->
<svg class="a" style="left:768px;top:122px" width="12" height="12" viewBox="0 0 12 12"><rect x="0.5" y="0.5" width="11" height="10" fill="#fff" stroke="#424242"/><rect x="0.5" y="0.5" width="11" height="2" fill="#424242"/><path d="M3 5 V9 H6" stroke="#1b5fa6" stroke-width="1.3" fill="none"/></svg>
<div class="a t row" style="left:784px;top:123.5px;font-size:9px">Solución 'Biblioteca'  (1 proyecto)</div>
<div class="a trd" style="left:767.5px;top:138px"></div>
<svg class="a" style="left:783px;top:136px" width="11" height="10" viewBox="0 0 11 10"><rect x="0.5" y="0.5" width="10" height="9" fill="#fff" stroke="#6b6b6b"/><text x="1.6" y="7.5" font-size="5.5" font-family="Liberation Sans" font-weight="bold" fill="#6b6b6b">VB</text></svg>
<div class="a t row" style="left:798px;top:137px;font-size:8.9px;font-weight:bold">Biblioteca</div>
<svg class="a" style="left:796px;top:150px" width="11" height="11" viewBox="0 0 11 11"><path d="M1 10 L6 5" stroke="#1e1e1e" stroke-width="2.4" stroke-linecap="round"/><circle cx="7.5" cy="3.5" r="2.8" fill="#1e1e1e"/><path d="M7.5 0 L11 3.5 L8.5 3.5 Z" fill="#fff"/></svg>
<div class="a t row" style="left:811px;top:150.8px;font-size:9px">My Project</div>
<svg class="a" style="left:782px;top:164.5px" width="5" height="8" viewBox="0 0 5 8"><path d="M0.5 0.5 L4.5 4 L0.5 7.5 Z" fill="none" stroke="#424242" stroke-width="1"/></svg>
<svg class="a" style="left:795px;top:165px" width="12" height="7" viewBox="0 0 12 7"><rect x="0" y="1.5" width="3" height="3" fill="#424242"/><rect x="7" y="0" width="5" height="6" fill="#1e1e1e"/><path d="M3 3 H7" stroke="#424242"/></svg>
<div class="a t row" style="left:811px;top:164px;font-size:9px">Referencias</div>
<svg class="a" style="left:796px;top:176px" width="11" height="12" viewBox="0 0 11 12"><path d="M3 0.5 H8 L10.5 3 V11.5 H3" fill="#fff" stroke="#424242"/><path d="M0.5 6 L3 3.5 M0.5 6 L3 8.5 M5 9 L7 4" stroke="#424242" fill="none"/></svg>
<div class="a t row" style="left:811px;top:177.5px;font-size:9px">App.config</div>
<div class="a" style="left:759px;top:189px;width:260px;height:13px;background:#dddddd"></div>
<svg class="a" style="left:797px;top:190px" width="9" height="11" viewBox="0 0 9 11"><path d="M0.5 2 V9.5 A4 1.5 0 0 0 8.5 9.5 V2" fill="#fff" stroke="#1e1e1e"/><ellipse cx="4.5" cy="2" rx="4" ry="1.5" fill="#fff" stroke="#1e1e1e"/><path d="M0.5 2 V9.5 H8.5 V2" fill="#424242"/></svg>
<div class="a t row" style="left:811px;top:191px;font-size:9px">Biblioteca.mdf</div>
<svg class="a" style="left:782px;top:205.5px" width="5" height="8" viewBox="0 0 5 8"><path d="M0.5 0.5 L4.5 4 L0.5 7.5 Z" fill="none" stroke="#424242" stroke-width="1"/></svg>
<svg class="a" style="left:795px;top:204px" width="12" height="10" viewBox="0 0 12 10"><rect x="0.5" y="0.5" width="11" height="9" fill="#fff" stroke="#424242"/><rect x="0.5" y="0.5" width="11" height="2" fill="#424242"/><path d="M2.5 5 H9.5 M2.5 7.5 H7" stroke="#424242"/></svg>
<div class="a t row" style="left:811px;top:205px;font-size:9px">Form1.vb</div>
<!-- bottom tabs -->
<div class="a" style="left:759px;top:247.3px;width:260px;height:14.7px;background:#303c59"></div>
<div class="a" style="left:759px;top:247.3px;width:106.5px;height:14.7px;background:#fff"></div>
<div class="a t" style="left:763.5px;top:249.8px;font-size:8.8px;color:#1e1e1e">Explorador de soluciones</div>
<div class="a" style="left:865.5px;top:247.3px;width:126.5px;height:14.7px;background:#53627f"></div>
<div class="a t" style="left:870px;top:250px;font-size:8.7px;color:#fff">Team Explorer</div>
<div class="a t" style="left:932px;top:250px;font-size:8.7px;color:#fff">Vista de clases</div>
<!-- PROPERTIES -->
<div class="a" style="left:759px;top:267.5px;width:260px;height:260px;background:#fff"></div>
<div class="a" style="left:759px;top:267.5px;width:260px;height:15.5px;background:#53627f"></div>
<div class="a t" style="left:762.5px;top:272px;font-size:8.7px;color:#fff">Propiedades</div>
<div class="a dd" style="left:983.2px;top:274px;border-top-color:#e9ecf2;border-width:2.6px 2.6px 0"></div>
<svg class="a" style="left:995.5px;top:271px" width="6" height="10" viewBox="0 0 6 10"><path d="M1.3 0.5 H4.7 V5.5 H1.3 Z M0 5.8 H6 M3 5.8 V9.5" stroke="#e9ecf2" fill="none" stroke-width="0.9"/><path d="M3.4 1 V5" stroke="#e9ecf2" stroke-width="0.8"/></svg>
<svg class="a" style="left:1007px;top:272px" width="7" height="7" viewBox="0 0 7 7"><path d="M0.5 0.5 L6.5 6.5 M6.5 0.5 L0.5 6.5" stroke="#e9ecf2" stroke-width="1.1"/></svg>
<div class="a t" style="left:768px;top:288px;font-size:8.85px;color:#1e1e1e;-webkit-text-stroke:0.1px #1e1e1e">Parámetros de la conexión actual</div>
<div class="a dd" style="left:1011px;top:291.5px"></div>
<div class="a" style="left:759px;top:301.5px;width:260px;height:19.5px;background:#d3d8e6"></div>
<svg class="a" style="left:764px;top:305px" width="12" height="11" viewBox="0 0 12 11"><rect x="0.5" y="0.5" width="4" height="4" fill="none" stroke="#424242"/><rect x="0.5" y="6.5" width="4" height="4" fill="none" stroke="#424242"/><path d="M6 1 H12 M6 3.5 H12 M6 7 H12 M6 9.5 H12" stroke="#6b6b6b"/><path d="M1.5 2.5 H3.5 M1.5 8.5 H3.5" stroke="#424242"/></svg>
<div class="a" style="left:778.5px;top:303.5px;width:19.5px;height:16.5px;background:#fdf4bf;border:1px solid #eedc9a"></div>
<svg class="a" style="left:782px;top:305px" width="13" height="13" viewBox="0 0 13 13"><text x="0" y="6" font-size="6.5" font-family="Liberation Sans" font-weight="bold" fill="#1e1e1e">A</text><text x="0" y="12.5" font-size="6.5" font-family="Liberation Sans" font-weight="bold" fill="#1e1e1e">Z</text><path d="M9.5 1 V10" stroke="#1b5fa6" stroke-width="1.6"/><path d="M6.5 8 L9.5 12 L12.5 8 Z" fill="#1b5fa6"/></svg>
<svg class="a" style="left:805px;top:306px" width="10" height="10" viewBox="0 0 11 11"><path d="M1 10 L6 5" stroke="#b9bec9" stroke-width="2.4" stroke-linecap="round"/><circle cx="7.5" cy="3.5" r="2.8" fill="#b9bec9"/><path d="M7.5 0 L11 3.5 L8.5 3.5 Z" fill="#d3d8e6"/></svg>
<div class="a" style="left:759px;top:321px;width:11.5px;height:206px;background:#f0f0f0"></div>
<div class="a" style="left:1005px;top:321px;width:14px;height:206px;background:#e8e8ec"></div>
<div class="a" style="left:1008.5px;top:326px;width:0;height:0;border-style:solid;border-width:0 3.5px 3.5px;border-color:transparent transparent #868686"></div>
<div class="a" style="left:1008.5px;top:334px;width:6px;height:110px;background:#d3d3d8"></div>
<div class="a" style="left:885.5px;top:321px;width:1px;height:206px;background:#f0f0f0"></div>
<div id="pgrid" class="a" style="left:770.5px;top:321px;width:234.5px">
<div class="pr"><span>Condición</span><span>Abierta</span></div>
<div class="pr"><span>Filas devueltas</span><span>0</span></div>
<div class="pr"><span>Hora de finalización</span><span>28/08/2016 07:27:13 a. m.</span></div>
<div class="pr"><span>Hora de inicio</span><span>28/08/2016 07:27:13 a. m.</span></div>
<div class="pr"><span>Id. de seguimiento de la sesión</span><span></span></div>
<div class="pr"><span>Nombre de conexión</span><span>(LocalDB)\MSSQLLocalDB  (DESKTOP</span></div>
<div class="pr"><span>Nombre de inicio de sesión</span><span>DESKTOP-AENS0J5\blo</span></div>
<div class="pr"><span>Nombre del servidor</span><span>(LocalDB)\MSSQLLocalDB</span></div>
<div class="pr" style="background:linear-gradient(90deg,#e2e2e2 0 115px,transparent 115px)"><span>Nombre para mostrar</span><span>(LocalDB)\MSSQLLocalDB</span></div>
</div>

<!-- STATUS BAR -->
<div class="a" style="left:0;top:529px;width:1024px;height:17.5px;background:#0a7bd2"></div>
<div class="a t" style="left:3px;top:533.5px;font-size:9.3px;color:#e6f2fa">Coincidencias: (</div>
<div class="a t sb" style="left:758.5px">Lín 38</div>
<div class="a t sb" style="left:828px">Col 34</div>
<div class="a t sb" style="left:896.5px">Car 34</div>
<div class="a t sb" style="left:999px">INS</div>
<!-- TASKBAR -->
<div class="a" style="left:0;top:546.5px;width:1024px;height:29.5px;background:#1f292b"></div>
<svg class="a" style="left:11.5px;top:555.5px" width="13" height="12" viewBox="0 0 13 12"><path d="M0 1.6 L5.5 0.8 V5.6 H0 Z M6.3 0.7 L13 0 V5.6 H6.3 Z M0 6.4 H5.5 V11.2 L0 10.4 Z M6.3 6.4 H13 V12 L6.3 11.3 Z" fill="#fff"/></svg>
<svg class="a" style="left:45px;top:557px" width="17" height="11" viewBox="0 0 17 11"><rect x="3.5" y="0.5" width="10" height="10" rx="1.5" fill="none" stroke="#e8e8e8" stroke-width="1.1"/><path d="M1 2 V9 M16 2 V9" stroke="#e8e8e8" stroke-width="1.1"/></svg>
<svg class="a" style="left:83px;top:555px" width="17" height="14" viewBox="0 0 17 14"><path d="M0 1 H6 L7.5 2.5 H17 V14 H0 Z" fill="#f0c85a"/><rect x="0" y="5" width="17" height="9" fill="#f8dc7a"/><rect x="5" y="8" width="7" height="4" fill="#3a9bd9"/></svg>
<div class="a" style="left:76px;top:574px;width:29px;height:2px;background:#8d9397"></div>
<div class="a" style="left:113px;top:547px;width:27px;height:29px;background:#476247"></div>
<div class="a" style="left:113px;top:574px;width:27px;height:2px;background:#6ab56a"></div>
<svg class="a" style="left:120px;top:552px" width="14" height="19" viewBox="0 0 14 19"><circle cx="5" cy="2.5" r="2" fill="#1a1a1a"/><path d="M3 5 H7 V19 H3 Z" fill="#111"/><path d="M0 5 L3 9" stroke="#ddd" stroke-width="1.5"/><rect x="8" y="8" width="5" height="5" fill="#b7aa88"/></svg>
<svg class="a" style="left:158px;top:555px" width="15" height="14" viewBox="0 0 15 14"><path d="M13.8 8 H4 C4.3 11 8 12.5 12.5 11 V13 C7 15 1 12.5 1 7.5 C1 2.5 5.5 0 9 0.3 C12.5 0.6 14.5 3.5 13.8 8 Z M4.1 5.8 H10.5 C10.3 3.8 9 2.8 7.4 2.8 C5.8 2.8 4.5 3.8 4.1 5.8 Z" fill="#1e8fe1" fill-rule="evenodd"/></svg>
<div class="a" style="left:150px;top:574px;width:29px;height:2px;background:#8d9397"></div>
<svg class="a" style="left:192px;top:554px" width="19" height="15" viewBox="0 0 19 15"><path d="M2 3 L10 1 L12 11 L4 13 Z" fill="#bfe08a"/><path d="M7 4 L17 3 L18 13 L8 14 Z" fill="#f5e27a"/></svg>
<div class="a" style="left:186px;top:574px;width:31px;height:2px;background:#8d9397"></div>
<svg class="a" style="left:229px;top:553px" width="17" height="18" viewBox="0 0 17 18"><rect x="2" y="1" width="14" height="11" fill="#dfe8f5" stroke="#5f7fb5"/><rect x="4" y="3" width="10" height="7" fill="#4a7fd0"/><path d="M0 8 L6 6 L8 12 L3 16 Z" fill="#9ab3d6"/><rect x="6" y="13" width="6" height="3" fill="#c9d1db"/></svg>
<div class="a" style="left:222px;top:574px;width:31px;height:2px;background:#8d9397"></div>
<div class="a" style="left:257px;top:547px;width:36px;height:29px;background:#3d4345"></div>
<div class="a" style="left:257px;top:574px;width:36px;height:2px;background:#a6aaad"></div>
<svg class="a" style="left:265px;top:552px" width="20" height="18" viewBox="0 0 17 15"><path d="M7 7.3 L3.3 4 Q1.4 3.4 1.4 5.2 V9.4 Q1.4 11.2 3.3 10.6 Z" fill="none" stroke="#a46fd6" stroke-width="1.7" stroke-linejoin="round"/><path d="M6.2 7.3 L11.3 0.3 L15.8 1.6 V13 L11.3 14.3 Z M11.6 4 L8.6 7.3 L11.6 10.6 Z" fill="#a46fd6" fill-rule="evenodd"/></svg>
<!-- tray -->
<div class="a" style="left:847px;top:549.5px;width:24px;height:24px;border-radius:12px;background:#1b8fd6;border:2px solid #f2f7fb"></div>
<div class="a t" style="left:853px;top:552px;font-size:17px;font-weight:bold;color:#fff">?</div>
<svg class="a" style="left:876px;top:558px" width="9" height="6" viewBox="0 0 9 6"><path d="M0.5 5.5 L4.5 1 L8.5 5.5" stroke="#e6e6e6" stroke-width="1.2" fill="none"/></svg>
<svg class="a" style="left:891px;top:556px" width="13" height="10" viewBox="0 0 13 10"><rect x="3" y="2" width="9.5" height="6" fill="#e6e6e6"/><path d="M0 1 L3 3 M0 5 H3" stroke="#e6e6e6"/></svg>
<svg class="a" style="left:909px;top:555px" width="14" height="12" viewBox="0 0 14 12"><path d="M0.5 4 H3 L6.5 1 V11 L3 8 H0.5 Z" fill="none" stroke="#e6e6e6"/><path d="M8.5 3.5 Q10 6 8.5 8.5 M10.5 2 Q13 6 10.5 10" stroke="#e6e6e6" fill="none"/></svg>
<svg class="a" style="left:928px;top:555px" width="12" height="12" viewBox="0 0 12 12"><circle cx="1.5" cy="1.5" r="1.3" fill="#e6e6e6"/><path d="M11 11 m-10 0 a10 10 0 0 1 10 -10 M11 11 m-7 0 a7 7 0 0 1 7 -7 M11 11 m-4 0 a4 4 0 0 1 4 -4" stroke="#8d9396" stroke-width="1.1" fill="none"/><circle cx="10.5" cy="10.5" r="1.2" fill="#e6e6e6"/></svg>
<svg class="a" style="left:945px;top:554px" width="14" height="14" viewBox="0 0 14 14"><path d="M0.5 0.5 H12 V7 M0.5 0.5 V12.5 H7" stroke="#e6e6e6" fill="none"/><path d="M3 3.5 H9.5 M3 6 H9.5 M3 8.5 H6" stroke="#e6e6e6"/><circle cx="10" cy="10.5" r="3" fill="none" stroke="#e6e6e6"/></svg>
<div class="a t" style="left:968.5px;top:550px;font-size:8.5px;color:#f2f2f2">07:32 a. m.</div>
<div class="a t" style="left:968.5px;top:563px;font-size:8.7px;color:#f2f2f2">28/08/2016</div>
<!-- CAMTASIA RECORDER -->
<div class="a" style="left:641.5px;top:443px;width:374.3px;height:89.8px;background:#141414;border-radius:3px 3px 0 0;box-shadow:0 0 1px #000"></div>
<div class="a" style="left:641.5px;top:443px;width:374.3px;height:15.5px;background:linear-gradient(#d0d0d0,#b4b4b4);border-radius:3px 3px 0 0"></div>
<div class="a t cm" style="left:647px">Capture</div>
<div class="a t cm" style="left:690.5px">Effects</div>
<div class="a t cm" style="left:729px">Tools</div>
<div class="a t cm" style="left:761.5px">Help</div>
<div class="a" style="left:988.5px;top:449.8px;width:5px;height:1.6px;background:#222"></div>
<svg class="a" style="left:1004.5px;top:447px" width="7" height="7" viewBox="0 0 7 7"><path d="M0.5 0.5 L6.5 6.5 M6.5 0.5 L0.5 6.5" stroke="#222" stroke-width="1.6"/></svg>
<div class="a" style="left:649.3px;top:463.7px;width:154.3px;height:61.2px;background:#1c1c1c;border:1px solid #2c2c2c;border-radius:4px"></div>
<div class="a" style="left:650.3px;top:479px;width:152.3px;height:1px;background:#2b2b2b"></div>
<div class="a t" style="left:710.5px;top:468.5px;font-size:8.2px;color:#cfcfcf">Duration</div>
<div class="a" style="left:654.2px;top:483.9px;width:144px;height:35.1px;border-radius:4px;background:linear-gradient(#6a6a6a,#4a4a4a 45%,#383838)"></div>
<div class="a t" style="left:673px;top:484.5px;font-size:33px;color:#f4f4f4;letter-spacing:0.1px;-webkit-text-stroke:0">0:11:57</div>
<div class="a" style="left:808.6px;top:464.7px;width:84.8px;height:60.1px;background:#1c1c1c;border:1px solid #2c2c2c;border-radius:4px"></div>
<div class="a" style="left:809.6px;top:479px;width:82.8px;height:1px;background:#2b2b2b"></div>
<div class="a t" style="left:840.5px;top:468.5px;font-size:8.2px;color:#cfcfcf">Audio</div>
<svg class="a" style="left:820px;top:490px" width="64" height="20" viewBox="0 0 64 20"><defs><linearGradient id="mg" x1="0" x2="1"><stop offset="0" stop-color="#5fd12f"/><stop offset="0.5" stop-color="#e8d23a"/><stop offset="1" stop-color="#f08a1e"/></linearGradient></defs><path d="M2.5 11 L60 3 V16.5 H2.5 Z" fill="#d8d8d8"/><rect x="2.5" y="11" width="49" height="5.5" fill="url(#mg)"/><path d="M4 1.5 V11 M31 1.5 V8 M58 1.5 V4" stroke="#9a9a9a" stroke-width="0.8"/><rect x="48" y="7" width="7" height="10.5" rx="2.5" fill="#a9d3ef" stroke="#5ea0d0" stroke-width="0.8"/><rect x="55" y="11" width="6" height="5.5" fill="#f4f4f4"/></svg>
<svg class="a" style="left:895px;top:470px" width="40" height="40" viewBox="0 0 40 40"><defs><linearGradient id="dg" x1="0" y1="0" x2="0" y2="1"><stop offset="0" stop-color="#c4c4c4"/><stop offset="1" stop-color="#8a8a8a"/></linearGradient></defs><circle cx="20.8" cy="20.3" r="12.8" fill="url(#dg)"/><path d="M20.8 20.3 L5.5 11.5 L10 6.5 Z" fill="#141414"/><circle cx="20.8" cy="20.3" r="6" fill="#141414"/><path d="M6 12.5 L17 16.5 L9 26.5 Z" fill="url(#dg)"/><path d="M12.5 21.5 L17.5 17" stroke="#141414" stroke-width="1"/></svg>
<div class="a t cl" style="left:902.5px">Delete</div>
<div class="a" style="left:944px;top:476.5px;width:6.5px;height:27.5px;background:linear-gradient(90deg,#8c8c8c,#cfcfcf,#8c8c8c)"></div>
<div class="a" style="left:955px;top:476.5px;width:6.5px;height:27.5px;background:linear-gradient(90deg,#8c8c8c,#cfcfcf,#8c8c8c)"></div>
<div class="a t cl" style="left:941.5px">Pause</div>
<div class="a" style="left:978px;top:476.5px;width:27px;height:27.5px;background:linear-gradient(160deg,#bdbdbd,#9a9a9a 50%,#7d7d7d)"></div>
<div class="a t cl" style="left:983.5px">Stop</div>

</div><div style="position:absolute;left:0;top:0;width:1024px;height:576px;overflow:hidden;filter:blur(1px);opacity:0.5">
<div class="a" id="top"></div>
<div class="a" id="topline"></div>
<!-- TITLE BAR -->
<svg class="a" style="left:8px;top:6px" width="17" height="15" viewBox="0 0 17 15"><path d="M7 7.3 L3.3 4 Q1.4 3.4 1.4 5.2 V9.4 Q1.4 11.2 3.3 10.6 Z" fill="none" stroke="#5f2a78" stroke-width="1.7" stroke-linejoin="round"/><path d="M6.2 7.3 L11.3 0.3 L15.8 1.6 V13 L11.3 14.3 Z M11.6 4 L8.6 7.3 L11.6 10.6 Z" fill="#5f2a78" fill-rule="evenodd"/></svg>
<div class="a t" style="left:33px;top:9.5px;font-size:9.1px;color:#1e1e1e">Biblioteca - Microsoft Visual Studio</div>
<svg class="a" style="left:755px;top:5px" width="9" height="9" viewBox="0 0 9 9"><path d="M0.5 0.5 H8.5 L5.5 4 V8.5 L3.5 7 V4 Z" fill="none" stroke="#a0a4ad" stroke-width="1"/></svg>
<div class="a" style="left:777px;top:5px;width:12px;height:12px;border-radius:6px;background:#f3c623"></div>
<div class="a" style="left:780px;top:8px;width:2px;height:2px;background:#6b4b00;border-radius:1px"></div>
<div class="a" style="left:784px;top:8px;width:2px;height:2px;background:#6b4b00;border-radius:1px"></div>
<div class="a" style="left:779.5px;top:9px;width:7px;height:5px;border-bottom:1.3px solid #6b4b00;border-radius:0 0 4px 4px"></div>
<div class="a" style="left:797px;top:3px;width:149px;height:15px;background:#fff;border:1px solid #e6e8ee"></div>
<div class="a t" style="left:800px;top:6px;font-size:9.1px;color:#717171">Inicio rápido (Ctrl+Q)</div>
<svg class="a" style="left:933px;top:5px" width="11" height="11" viewBox="0 0 11 11"><circle cx="6.5" cy="4.5" r="3.2" fill="none" stroke="#1e1e1e" stroke-width="1.4"/><path d="M4.3 6.7 L1 10" stroke="#1e1e1e" stroke-width="1.8"/></svg>
<div class="a" style="left:957px;top:12px;width:7px;height:2px;background:#1e1e1e"></div>
<svg class="a" style="left:980px;top:6px" width="10" height="10" viewBox="0 0 10 10"><rect x="3" y="1" width="6" height="5" fill="none" stroke="#1e1e1e" stroke-width="1.3"/><rect x="1" y="3.5" width="6" height="5" fill="#d8dbe8" stroke="#1e1e1e" stroke-width="1.3"/></svg>
<svg class="a" style="left:1007px;top:7px" width="9" height="9" viewBox="0 0 9 9"><path d="M1 1 L8 8 M8 1 L1 8" stroke="#1e1e1e" stroke-width="1.5"/></svg>
<!-- MENU -->
<div class="a t menu" style="left:7px">Archivo</div>
<div class="a t menu" style="left:53px">Editar</div>
<div class="a t menu" style="left:90px">Ver</div>
<div class="a t menu" style="left:117.5px">Proyecto</div>
<div class="a t menu" style="left:168px">Compilación</div>
<div class="a t menu" style="left:234px">Depurar</div>
<div class="a t menu" style="left:280.5px">Equipo</div>
<div class="a t menu" style="left:322.5px">SQL</div>
<div class="a t menu" style="left:353.5px">Herramientas</div>
<div class="a t menu" style="left:421.5px">Arquitectura</div>
<div class="a t menu" style="left:486px">Pruebas</div>
<div class="a t menu" style="left:532.5px">Analizar</div>
<div class="a t menu" style="left:579px">Ventana</div>
<div class="a t menu" style="left:625.5px">Ayuda</div>
<div class="a t" style="left:946.5px;top:28px;font-size:8.8px;color:#1e1e1e">Iniciar sesión</div>
<div class="a" style="left:1005px;top:26px;width:12px;height:12px;background:#a7abb3"></div>
<div class="a" style="left:1008.5px;top:27.5px;width:5px;height:4.5px;background:#e8eaef"></div>
<div class="a" style="left:1007px;top:33.5px;width:8px;height:3.5px;background:#e8eaef"></div>
<!-- TOOLBAR -->
<div class="a" style="left:9px;top:41px;width:4px;height:15px;background:repeating-linear-gradient(#b9bfcc 0 1px,transparent 1px 2px)"></div>
<div class="a" style="left:19.5px;top:44.5px;width:9.5px;height:9.5px;border-radius:5px;background:#1b3f7a"></div>
<svg class="a" style="left:20px;top:45px" width="9" height="9" viewBox="0 0 9 9"><path d="M7 4.5 H2.5 M4.5 2.3 L2.3 4.5 L4.5 6.7" stroke="#fff" stroke-width="1.3" fill="none"/></svg>
<div class="a dd" style="left:35px;top:48px"></div>
<div class="a" style="left:45px;top:44.5px;width:9px;height:9px;border-radius:5px;border:1.5px solid #c6cad2"></div>
<div class="a sep" style="left:60px"></div>
<svg class="a" style="left:67px;top:43px" width="11" height="12" viewBox="0 0 11 12"><rect x="2" y="3" width="8" height="8.5" fill="#fff" stroke="#424242" stroke-width="1"/><rect x="0.5" y="0.5" width="4" height="3" fill="#d2a36a"/><path d="M5 6 H8 M5 8 H8" stroke="#424242"/></svg>
<div class="a dd" style="left:83px;top:48px"></div>
<svg class="a" style="left:92px;top:43px" width="13" height="13" viewBox="0 0 13 13"><path d="M1 5 H5 L6 4 H11.5 V11.5 H1 Z" fill="#e3c58c"/><path d="M1.5 5 C1.5 2 4 0.8 6 2.2" stroke="#1f4f7f" stroke-width="1.6" fill="none"/><path d="M4.8 0.3 L7.2 2.6 L4.5 3.6 Z" fill="#1f4f7f"/></svg>
<svg class="a" style="left:110px;top:44.5px" width="9.5" height="10" viewBox="0 0 9.5 10"><path d="M0 0 H8 L9.5 1.5 V9.5 H0 Z" fill="#1b4c84"/><rect x="4.3" y="0" width="1.8" height="2.3" fill="#e8eef6"/><rect x="2" y="5.5" width="5.5" height="2.5" fill="#2f62a0"/></svg>
<svg class="a" style="left:126px;top:44px" width="11" height="11" viewBox="0 0 11 11"><path d="M4.5 0 H10.5 V5.5 H4.5 Z" fill="#1b4c84"/><rect x="6.8" y="0" width="1.4" height="1.8" fill="#e8eef6"/><path d="M0 4.5 H6 V10.7 H0 Z" fill="#1b4c84" stroke="#d8dbe8" stroke-width="0.6"/><rect x="2.3" y="4.8" width="1.4" height="1.8" fill="#e8eef6"/></svg>
<div class="a sep" style="left:141px"></div>
<svg class="a" style="left:148px;top:43.5px" width="11" height="12" viewBox="0 0 11 12"><path d="M0 3 L4.5 0 V6 Z" fill="#1b4c84"/><path d="M4 3 H6 C9.8 3 10.2 8 7.2 10 L4.8 11.5" stroke="#1b4c84" stroke-width="2" fill="none"/></svg>
<div class="a dd" style="left:165px;top:48px"></div>
<svg class="a" style="left:175.5px;top:43.5px" width="11" height="12" viewBox="0 0 11 12"><path d="M11 3 L6.5 0 V6 Z" fill="#c9ccd4"/><path d="M7 3 H5 C1.2 3 0.8 8 3.8 10 L6.2 11.5" stroke="#c9ccd4" stroke-width="2" fill="none"/></svg>
<div class="a dd" style="left:191px;top:48px;border-top-color:#b0b4bc"></div>
<div class="a sep" style="left:200px"></div>
<div class="a" style="left:206px;top:42px;width:48px;height:15px;background:#fff"></div>
<div class="a t" style="left:209.5px;top:44.5px;font-size:8.9px;color:#1e1e1e">Debug</div>
<div class="a dd" style="left:247px;top:49px"></div>
<div class="a" style="left:260px;top:42px;width:82px;height:15px;background:#fff"></div>
<div class="a t" style="left:262.5px;top:44.5px;font-size:8.9px;color:#1e1e1e">Any CPU</div>
<div class="a dd" style="left:335px;top:49px"></div>
<svg class="a" style="left:350px;top:44.5px" width="7" height="9" viewBox="0 0 7 9"><path d="M0 0 L7 4.5 L0 9 Z" fill="#388a34"/></svg>
<div class="a t" style="left:361.5px;top:44.5px;font-size:9px;color:#1e1e1e">Iniciar</div>
<div class="a dd" style="left:390px;top:48px"></div>
<div class="a sep" style="left:400px"></div>
<svg class="a" style="left:405px;top:43px" width="13" height="13" viewBox="0 0 13 13"><rect x="4" y="0" width="9" height="9" fill="#dcb67a"/><circle cx="4" cy="8" r="2.5" fill="none" stroke="#424242" stroke-width="1.2"/><path d="M2.3 9.8 L0.5 12" stroke="#424242" stroke-width="1.3"/></svg>
<div class="a" style="left:423px;top:51px;width:5px;height:1px;background:#1e1e1e"></div>
<div class="a dd" style="left:423px;top:53px;border-width:3px 2.5px 0"></div>
<div class="a" style="left:432px;top:42px;width:3px;height:14px;background:repeating-linear-gradient(#c6cad2 0 1px,transparent 1px 2px)"></div>
<svg class="a" style="left:440px;top:43px" width="12" height="12" viewBox="0 0 12 12"><path d="M1 0 L4 4 L1 5 Z" fill="#1b3f7a"/><rect x="3.5" y="5" width="8" height="6" fill="none" stroke="#424242"/><path d="M5.5 8 H9.5" stroke="#424242"/></svg>
<div class="a" style="left:454px;top:40.5px;width:18px;height:17px;background:#fdf4bf;border:1px solid #eedc9a"></div>
<svg class="a" style="left:457px;top:43px" width="12" height="12" viewBox="0 0 12 12"><rect x="0.5" y="1" width="2.5" height="5" fill="#424242"/><rect x="3.5" y="1" width="8" height="1.5" fill="#424242"/><rect x="5" y="3.5" width="6" height="8" fill="none" stroke="#424242"/><path d="M7 5.5 H9.5 M7 7.5 H9.5 M7 9.5 H9.5" stroke="#424242"/></svg>
<div class="a sep" style="left:477px"></div>
<svg class="a" style="left:480px;top:44px" width="10" height="10" viewBox="0 0 10 10"><path d="M0 1 H6 M3 3.5 H9 M3 6 H9 M3 8.5 H9" stroke="#424242" stroke-width="1"/></svg>
<svg class="a" style="left:495px;top:43px" width="12" height="11" viewBox="0 0 12 11"><path d="M1 2 Q1 0.5 2.5 0.5 Q4 0.5 4 2 Q4 3 2.5 3.5 V5" stroke="#424242" stroke-width="1.2" fill="none"/><path d="M5 4 H11 M5 6.5 H11 M5 9 H11" stroke="#424242"/></svg>
<div class="a sep" style="left:511px"></div>
<svg class="a" style="left:518.5px;top:43.5px" width="9" height="10" viewBox="0 0 9 10"><path d="M0 0 H9 V10 L4.5 7 L0 10 Z" fill="#283448"/></svg>
<svg class="a" style="left:536px;top:43.5px" width="10" height="11" viewBox="0 0 10 11"><path d="M4 0 H10 V8 L7 6 L4 8 Z M0 4 H3 M1 2 H3 M0 9 H6" stroke="#c6cad2" fill="#c6cad2"/></svg>
<svg class="a" style="left:552px;top:43.5px" width="10" height="11" viewBox="0 0 10 11"><path d="M4 0 H10 V8 L7 6 L4 8 Z M0 4 H3 M1 2 H3 M0 9 H6" stroke="#c6cad2" fill="#c6cad2"/></svg>
<svg class="a" style="left:568px;top:43.5px" width="10" height="11" viewBox="0 0 10 11"><path d="M4 0 H10 V8 L7 6 L4 8 Z M0 4 H3 M1 2 H3 M0 9 H6" stroke="#c6cad2" fill="#c6cad2"/></svg>
<div class="a" style="left:584px;top:51px;width:5px;height:1px;background:#1e1e1e"></div>
<div class="a dd" style="left:584px;top:53px;border-width:3px 2.5px 0"></div>

<!-- LEFT TAB -->
<div class="a" style="left:0;top:63px;width:4px;height:72px;background:#53627f"></div>
<div class="a t" style="left:17px;top:64px;font-size:8.8px;color:#e8ebf2;transform-origin:0 0;transform:rotate(90deg)">Orígenes de datos</div>
<!-- SERVER EXPLORER -->
<div class="a" style="left:23px;top:64px;width:148.7px;height:461px;background:#fff"></div>
<div class="a" style="left:23px;top:64px;width:149px;height:16.5px;background:#53627f"></div>
<div class="a t" style="left:27px;top:69px;font-size:8.7px;color:#fff">Explorador de servidores</div>
<div class="a dd" style="left:136px;top:71px;border-top-color:#e9ecf2;border-width:2.6px 2.6px 0"></div>
<svg class="a" style="left:148.5px;top:68px" width="6" height="10" viewBox="0 0 6 10"><path d="M1.3 0.5 H4.7 V5.5 H1.3 Z M0 5.8 H6 M3 5.8 V9.5" stroke="#e9ecf2" fill="none" stroke-width="0.9"/><path d="M3.4 1 V5" stroke="#e9ecf2" stroke-width="0.8"/></svg>
<svg class="a" style="left:160px;top:69px" width="7" height="7" viewBox="0 0 7 7"><path d="M0.5 0.5 L6.5 6.5 M6.5 0.5 L0.5 6.5" stroke="#e9ecf2" stroke-width="1.1"/></svg>
<div class="a" style="left:23px;top:80.5px;width:148.7px;height:19.5px;background:#d3d8e6"></div>
<svg class="a" style="left:30px;top:84px" width="11" height="12" viewBox="0 0 11 12"><path d="M8.5 4 A4 4 0 1 0 9 7.5" stroke="#1b5fa6" stroke-width="2" fill="none"/><path d="M6 1 L10 1.5 L9.5 5.5 Z" fill="#1b5fa6"/></svg>
<svg class="a" style="left:48px;top:87px" width="7" height="7" viewBox="0 0 7 7"><path d="M0.5 0.5 L6.5 6.5 M6.5 0.5 L0.5 6.5" stroke="#c3c7cf" stroke-width="1.3"/></svg>
<div class="a" style="left:62px;top:83px;width:1px;height:15px;background:#b4bbcb"></div>
<svg class="a" style="left:69px;top:84px" width="11" height="11" viewBox="0 0 11 11"><path d="M0 0 H3 L1.5 2 Z" fill="#424242"/><rect x="4" y="4" width="6" height="7" rx="1" fill="#424242"/></svg>
<svg class="a" style="left:85px;top:84px" width="11" height="11" viewBox="0 0 11 11"><path d="M0 0 H3 L1.5 2 Z" fill="#424242"/><path d="M4 3 H10 M4 6 H10 M4 9 H10" stroke="#424242" stroke-width="2"/></svg>
<svg class="a" style="left:104px;top:84px" width="8" height="11" viewBox="0 0 8 11"><rect x="0" y="0" width="8" height="11" fill="#d4d8df"/></svg>
<svg class="a" style="left:117px;top:85px" width="13" height="9" viewBox="0 0 13 9"><path d="M2.5 8.5 A2.5 2.5 0 0 1 2 4 A3.5 3.5 0 0 1 8.5 2.5 A3 3 0 0 1 11 8.5 Z" fill="#7cc0ee" stroke="#1b8be0" stroke-width="1"/></svg>
<div class="a" style="left:134.5px;top:83px;width:1px;height:15px;background:#b4bbcb"></div>
<svg class="a" style="left:141px;top:84px" width="11" height="12" viewBox="0 0 11 12"><rect x="0" y="0" width="2.5" height="12" fill="#1e1e1e"/><path d="M4.5 2.5 H8 V5 H4.5 Z M6.5 7 H10 V9.5 H6.5 Z M4 4 V9 H6.5" stroke="#424242" fill="none"/></svg>
<!-- tree -->
<svg class="a" style="left:34px;top:104px" width="5" height="8" viewBox="0 0 5 8"><path d="M0.5 0.5 L4.5 4 L0.5 7.5 Z" fill="none" stroke="#424242" stroke-width="1"/></svg>
<svg class="a" style="left:47px;top:103px" width="12" height="9" viewBox="0 0 12 9"><path d="M3 8 C0.5 8 0.3 4.8 2.5 4.3 C3 1.5 6.5 0.8 8 3 C10.5 2.8 11.5 6.5 9 7.5" fill="none" stroke="#3aa0dc" stroke-width="1.6"/><path d="M1.5 5.5 H8.5 L6.5 8.2" fill="none" stroke="#6cc0ea" stroke-width="1.3"/></svg>
<div class="a t row" style="left:62.5px;top:103px">Azure</div>
<div class="a trd" style="left:33px;top:118.5px"></div>
<svg class="a" style="left:48px;top:116px" width="11" height="11" viewBox="0 0 11 11"><rect x="0" y="3" width="6" height="8" rx="1.5" fill="#424242"/><rect x="5" y="0" width="6" height="8" rx="1.5" fill="#424242" stroke="#fff" stroke-width="0.8"/></svg>
<div class="a t row" style="left:62.5px;top:117px">Conexiones de datos</div>
<div class="a" style="left:24px;top:128.5px;width:147px;height:12px;background:#dddddd"></div>
<div class="a trd" style="left:47px;top:132px"></div>
<svg class="a" style="left:62px;top:129px" width="10" height="11" viewBox="0 0 10 11"><rect x="0" y="0" width="8" height="10" rx="2" fill="#424242"/><ellipse cx="4" cy="2" rx="3" ry="1" fill="#ccc"/><circle cx="8" cy="9" r="2" fill="#388a34"/></svg>
<div class="a t row" style="left:76.5px;top:130px">Biblioteca.mdf</div>
<svg class="a" style="left:62.5px;top:145px" width="5" height="8" viewBox="0 0 5 8"><path d="M0.5 0.5 L4.5 4 L0.5 7.5 Z" fill="none" stroke="#424242" stroke-width="1"/></svg><div class="a fold" style="top:144px"></div><div class="a t row" style="left:91px;top:144px">Tablas</div>
<svg class="a" style="left:62.5px;top:158.5px" width="5" height="8" viewBox="0 0 5 8"><path d="M0.5 0.5 L4.5 4 L0.5 7.5 Z" fill="none" stroke="#424242" stroke-width="1"/></svg><div class="a fold" style="top:157.5px"></div><div class="a t row" style="left:91px;top:157.5px">Vistas</div>
<svg class="a" style="left:62.5px;top:172px" width="5" height="8" viewBox="0 0 5 8"><path d="M0.5 0.5 L4.5 4 L0.5 7.5 Z" fill="none" stroke="#424242" stroke-width="1"/></svg><div class="a fold" style="top:171px"></div><div class="a t row" style="left:91px;top:171px;width:77px;overflow:hidden">Procedimientos almacenados</div>
<svg class="a" style="left:62.5px;top:185.5px" width="5" height="8" viewBox="0 0 5 8"><path d="M0.5 0.5 L4.5 4 L0.5 7.5 Z" fill="none" stroke="#424242" stroke-width="1"/></svg><div class="a fold" style="top:184.5px"></div><div class="a t row" style="left:91px;top:184.5px">Funciones</div>
<svg class="a" style="left:62.5px;top:199px" width="5" height="8" viewBox="0 0 5 8"><path d="M0.5 0.5 L4.5 4 L0.5 7.5 Z" fill="none" stroke="#424242" stroke-width="1"/></svg><div class="a fold" style="top:198px"></div><div class="a t row" style="left:91px;top:198px">Sinónimos</div>
<svg class="a" style="left:62.5px;top:212.5px" width="5" height="8" viewBox="0 0 5 8"><path d="M0.5 0.5 L4.5 4 L0.5 7.5 Z" fill="none" stroke="#424242" stroke-width="1"/></svg><div class="a fold" style="top:211.5px"></div><div class="a t row" style="left:91px;top:211.5px">Tipos</div>
<svg class="a" style="left:62.5px;top:226px" width="5" height="8" viewBox="0 0 5 8"><path d="M0.5 0.5 L4.5 4 L0.5 7.5 Z" fill="none" stroke="#424242" stroke-width="1"/></svg><div class="a fold" style="top:225px"></div><div class="a t row" style="left:91px;top:225px">Ensamblados</div>
<svg class="a" style="left:34px;top:239px" width="5" height="8" viewBox="0 0 5 8"><path d="M0.5 0.5 L4.5 4 L0.5 7.5 Z" fill="none" stroke="#424242" stroke-width="1"/></svg>
<svg class="a" style="left:48px;top:237px" width="9" height="11" viewBox="0 0 9 11"><path d="M0 1.5 H9 M0 4.5 H9 M0 7.5 H9 M0 10 H9" stroke="#424242" stroke-width="2"/></svg>
<div class="a t row" style="left:62.5px;top:238px">Servidores</div>
<!-- h scrollbar -->
<div class="a" style="left:24px;top:498px;width:147px;height:10px;background:#e8e8ec"></div>
<div class="a" style="left:38px;top:500px;width:95px;height:6px;background:#d3d3d8"></div>
<div class="a" style="left:29px;top:500px;width:0;height:0;border-style:solid;border-width:3px 3px 3px 0;border-color:transparent #9a9a9a transparent transparent"></div>
<div class="a" style="left:163px;top:500px;width:0;height:0;border-style:solid;border-width:3px 0 3px 3px;border-color:transparent transparent transparent #9a9a9a"></div>
<!-- bottom tabs -->
<div class="a" style="left:23px;top:508px;width:149px;height:17px;background:#303c59"></div>
<div class="a" style="left:23px;top:508px;width:75px;height:17px;background:#fff"></div>
<div class="a t" style="left:27.5px;top:513px;font-size:8.8px;color:#1e1e1e">Explorador de...</div>
<div class="a" style="left:98px;top:509.5px;width:74px;height:15.5px;background:#53627f"></div>
<div class="a t" style="left:102px;top:513.5px;font-size:8.8px;color:#fff">Cuadro de herr...</div>

<!-- DOC TABS -->
<div class="a" style="left:177px;top:64.5px;width:99px;height:14.5px;background:#f8ee9e"></div>
<div class="a t" style="left:180px;top:67.5px;font-size:8.5px;color:#1e1e1e">SQLQuery1.sql *</div>
<svg class="a" style="left:249px;top:69px" width="9" height="7" viewBox="0 0 9 7"><path d="M0 3.5 H3 M3 1 V6 M3 1.5 H7.5 V5.5 H3 M3 4 H7.5" stroke="#1e1e1e" fill="none" stroke-width="1"/></svg>
<svg class="a" style="left:265px;top:68.5px" width="7" height="7" viewBox="0 0 7 7"><path d="M0.5 0.5 L6.5 6.5 M6.5 0.5 L0.5 6.5" stroke="#5a5630" stroke-width="1.1"/></svg>
<div class="a" style="left:276px;top:64.5px;width:108px;height:13.5px;background:#3d4d70"></div>
<div class="a t" style="left:279px;top:67.5px;font-size:8.8px;color:#fff">Form1.vb [Diseño]</div>
<div class="a dd" style="left:744px;top:70px;border-top-color:#fff;border-width:3.5px 3.5px 0"></div>
<div class="a" style="left:177px;top:79px;width:577px;height:2px;background:#e9eec3"></div>
<!-- EDITOR TOOLBAR -->
<div class="a" style="left:177px;top:81px;width:577px;height:20px;background:#d3d8e6"></div>
<svg class="a" style="left:185px;top:86px" width="7" height="10" viewBox="0 0 7 10"><path d="M0.8 0.8 L6 5 L0.8 9.2 Z" fill="none" stroke="#388a34" stroke-width="1.5"/></svg>
<div class="a dd" style="left:200px;top:90px"></div>
<div class="a" style="left:213px;top:87.5px;width:7px;height:7px;background:#c3c8d2"></div>
<svg class="a" style="left:228px;top:86px" width="7" height="9" viewBox="0 0 7 9"><path d="M0.8 5 L2.8 8 L6.3 0.8" stroke="#1b5fa6" stroke-width="1.6" fill="none"/></svg>
<svg class="a" style="left:243px;top:85px" width="10" height="12" viewBox="0 0 10 12"><path d="M3 0.5 H9.5 V11.5 H3 Z" fill="#fff" stroke="#424242"/><path d="M0.5 3 L5 3 L2 6 L5 9 H0.5" stroke="#424242" fill="none"/></svg>
<div class="a" style="left:259.5px;top:84px;width:1px;height:15px;background:#b4bbcb"></div>
<svg class="a" style="left:264px;top:86px" width="12" height="10" viewBox="0 0 12 10"><rect x="0" y="2" width="8" height="6" fill="#d0d4dc"/><rect x="9" y="0" width="2" height="5" fill="#d0d4dc"/></svg>
<svg class="a" style="left:281px;top:85px" width="12" height="11" viewBox="0 0 12 11"><rect x="0" y="3" width="8" height="5" fill="#1e1e1e"/><rect x="3" y="8" width="2" height="2" fill="#1e1e1e"/><rect x="9" y="0" width="2.5" height="6" fill="#1e1e1e"/></svg>
<svg class="a" style="left:297px;top:85px" width="12" height="11" viewBox="0 0 12 11"><rect x="0" y="3" width="8" height="5" fill="#1e1e1e"/><rect x="3" y="8" width="2" height="2" fill="#1e1e1e"/><rect x="9" y="0" width="2.5" height="6" fill="#1e1e1e"/></svg>
<div class="a" style="left:315px;top:83px;width:148px;height:16px;background:#fff"></div>
<div class="a t" style="left:317.5px;top:86.5px;font-size:8.3px;color:#1e1e1e;width:134px;overflow:hidden">C:\USERS\BIO\DOCUMENTS\VISUAL</div>
<div class="a dd" style="left:456px;top:90px"></div>
<svg class="a" style="left:467px;top:85px" width="11" height="11" viewBox="0 0 11 11"><rect x="3" y="4" width="7.5" height="6" fill="#fff" stroke="#424242"/><path d="M1 0 L2 2 L4 2 L2.5 3.2 L3 5 L1 4 L-1 5" fill="#dcb67a"/><path d="M5 6 H9 M5 8 H9" stroke="#424242"/></svg>
<div class="a" style="left:485px;top:84px;width:1px;height:15px;background:#b4bbcb"></div>
<svg class="a" style="left:492px;top:85px" width="11" height="11" viewBox="0 0 11 11"><rect x="0.5" y="1.5" width="10" height="9" fill="none" stroke="#424242"/><path d="M0.5 4 H10.5 M0.5 6.5 H10.5 M0.5 9 H10.5 M4 1.5 V10.5 M7 1.5 V10.5" stroke="#424242"/><rect x="0" y="0" width="11" height="2" fill="#424242"/></svg>
<div class="a dd" style="left:509px;top:90px"></div>
<svg class="a" style="left:517px;top:85px" width="12" height="11" viewBox="0 0 12 11"><rect x="0.5" y="0.5" width="4" height="3.5" fill="none" stroke="#424242"/><rect x="7.5" y="0.5" width="4" height="3.5" fill="none" stroke="#424242"/><rect x="0.5" y="7" width="4" height="3.5" fill="none" stroke="#424242"/><path d="M2.5 4 V7 M4.5 2.2 H7.5" stroke="#424242"/></svg>
<div class="a" style="left:534.5px;top:84px;width:1px;height:15px;background:#b4bbcb"></div>
<svg class="a" style="left:541px;top:85px" width="12" height="11" viewBox="0 0 12 11"><rect x="0.5" y="0.5" width="8" height="9" fill="#fff" stroke="#424242"/><rect x="0.5" y="0.5" width="8" height="2" fill="#424242"/><path d="M2 4.5 H7 M2 6.5 H7" stroke="#424242"/><path d="M10.5 2 V7.5 M10.5 8.5 V10" stroke="#1e1e1e" stroke-width="1.6"/></svg>
<!-- EDITOR BODY -->
<div class="a" style="left:177px;top:101px;width:564px;height:244.5px;background:#fff"></div>
<div class="a" style="left:177px;top:101px;width:20px;height:244.5px;background:#e9e9ea"></div>
<div class="a" style="left:198.2px;top:101px;width:6px;height:244.5px;background:#f5e25e"></div>
<!-- fold boxes and outline lines -->
<div class="a fb" style="left:208px;top:124.3px"></div>
<div class="a" style="left:212.5px;top:133.5px;width:1px;height:115.5px;background:#a5a5a5"></div>
<div class="a" style="left:212.5px;top:249px;width:4.5px;height:1px;background:#a5a5a5"></div>
<div class="a fb" style="left:208px;top:273px"></div>
<div class="a" style="left:212.5px;top:282.3px;width:1px;height:60px;background:#a5a5a5"></div>
<div class="a" style="left:212.5px;top:342px;width:4.5px;height:1px;background:#a5a5a5"></div>
<!-- current line box -->
<div class="a" style="left:218.5px;top:305.5px;width:520px;height:18px;border:1px solid #e4e4e4"></div>
<div class="a code" style="left:219.4px;top:121px"><span class="kw">CREATE</span> <span class="kw">TABLE</span> ENCABEZADO_PRESTAMO</div>
<div class="a code" style="left:219.4px;top:139.6px"><span class="gr">(</span></div>
<div class="a code" style="left:219.4px;top:158.2px"> NO_PRESTAMO <span class="kw">NUMERIC</span> <span class="kw">IDENTITY</span><span class="gr">(</span>1<span class="gr">,</span>1<span class="gr">)</span> <span class="kw">PRIMARY</span> <span class="kw">KEY</span><span class="gr">,</span></div>
<div class="a code" style="left:219.4px;top:176.8px"> COD_EMP <span class="kw">NUMERIC</span> <span class="kw">FOREIGN</span> <span class="kw">KEY</span> <span class="kw">REFERENCES</span> EMPLEADOS<span class="gr">(</span>COD_EMP<span class="gr">),</span></div>
<div class="a code" style="left:219.4px;top:195.4px"> COD_CLIENTE <span class="kw">NUMERIC</span> <span class="kw">FOREIGN</span> <span class="kw">KEY</span> <span class="kw">REFERENCES</span> CLIENTES<span class="gr">(</span>COD_CLIENTE<span class="gr">),</span></div>
<div class="a code" style="left:219.4px;top:214px"> FECHA <span class="kw">VARCHAR</span><span class="gr">(</span>30<span class="gr">)</span> <span class="gr">NOT NULL</span></div>
<div class="a code" style="left:219.4px;top:232.6px"><span class="gr">)</span></div>
<div class="a code" style="left:219.4px;top:270.4px"><span class="kw">CREATE</span> <span class="kw">TABLE</span> DETALLE_PRESTAMO</div>
<div class="a code" style="left:219.4px;top:289px"><span class="gr">(</span></div>
<div class="a code" style="left:219.4px;top:307.6px"> NO_PRESTAMO <span class="kw">NUMERIC</span> <span class="kw">FOREIGN</span> <span class="kw">KEY</span></div>
<div class="a code" style="left:219.4px;top:326.2px"><span class="gr">)</span></div>
<svg class="a" style="left:227px;top:321px" width="88" height="4" viewBox="0 0 88 4"><path d="M0 3 Q1.5 0 3 3 T6 3 T9 3 T12 3 T15 3 T18 3 T21 3 T24 3 T27 3 T30 3 T33 3 T36 3 T39 3 T42 3 T45 3 T48 3 T51 3 T54 3 T57 3 T60 3 T63 3 T66 3 T69 3 T72 3 T75 3 T78 3 T81 3 T84 3 T87 3" stroke="#e0505e" stroke-width="1.1" fill="none"/></svg>
<div class="a" style="left:478px;top:307px;width:1.6px;height:15.5px;background:#333"></div>
<svg class="a" style="left:321px;top:306px" width="5" height="13" viewBox="0 0 5 13"><path d="M0.3 0.5 H4.7 M2.5 0.5 V12.5 M0.3 12.5 H4.7" stroke="#333" stroke-width="0.9" fill="none"/></svg>
<!-- magnifier overlay -->
<svg class="a" style="left:170px;top:172px" width="46" height="52" viewBox="0 0 46 52"><circle cx="17.5" cy="17.7" r="15" fill="rgba(255,255,255,0.25)" stroke="#a8a8a8" stroke-width="1.6"/><path d="M29.5 30.5 L41.5 48" stroke="#8f8b78" stroke-width="3.8" stroke-linecap="round"/></svg>
<!-- vertical scrollbar -->
<div class="a" style="left:741px;top:101px;width:13px;height:244.5px;background:#e8e8ec"></div>
<div class="a" style="left:741.5px;top:101.5px;width:12px;height:12px;background:#f5f5f7;border:1px solid #d0d0d6"></div>
<svg class="a" style="left:743px;top:102.5px" width="9" height="10" viewBox="0 0 9 10"><path d="M0.5 5 H8.5" stroke="#222" stroke-width="1.4"/><path d="M2 1 H7 L4.5 3.6 Z M2 9 H7 L4.5 6.4 Z" fill="#222"/></svg>
<div class="a" style="left:744px;top:119px;width:0;height:0;border-style:solid;border-width:0 3.5px 3.5px;border-color:transparent transparent #a0a0a0"></div>
<div class="a" style="left:741px;top:124px;width:3.5px;height:165px;background:#efe574"></div>
<div class="a" style="left:745.5px;top:212px;width:6.5px;height:43px;background:#c9c9ce"></div>
<div class="a" style="left:741px;top:250px;width:10px;height:1.2px;background:#1e1e1e"></div>
<div class="a" style="left:749px;top:248.5px;width:5px;height:5px;border-radius:3px;background:#e51400"></div>
<div class="a" style="left:744px;top:336px;width:0;height:0;border-style:solid;border-width:3.5px 3.5px 0;border-color:#a0a0a0 transparent transparent"></div>
<!-- h scroll row -->
<div class="a" style="left:177px;top:345.5px;width:577px;height:12px;background:#e8e8ec"></div>
<div class="a" style="left:177px;top:345.5px;width:45px;height:12px;background:#fff"></div>
<div class="a t" style="left:180px;top:347.5px;font-size:8.2px;color:#1e1e1e">146 %</div>
<div class="a dd" style="left:215px;top:351px"></div>
<div class="a" style="left:228px;top:348px;width:0;height:0;border-style:solid;border-width:3.5px 3.5px 3.5px 0;border-color:transparent #a0a0a0 transparent transparent"></div>
<div class="a" style="left:234.5px;top:348px;width:344px;height:7px;background:#d3d3d8"></div>
<div class="a" style="left:733px;top:348px;width:0;height:0;border-style:solid;border-width:3.5px 0 3.5px 3.5px;border-color:transparent transparent transparent #a0a0a0"></div>
<!-- results tab strip -->
<div class="a" style="left:177px;top:357.5px;width:577px;height:16.5px;background:#eeeef2"></div>
<div class="a" style="left:177px;top:373px;width:577px;height:1px;background:#cccedb"></div>
<svg class="a" style="left:182px;top:358px" width="150" height="16" viewBox="0 0 150 16"><path d="M2 15.5 V1 H62.75 L48.7 15.5" fill="#f9f9fa" stroke="#d6d6dc"/><path d="M48.7 15.5 L62.75 1 H89 L78 15.5 Z" fill="#f1f1f4" stroke="#d6d6dc"/><path d="M78 15.8 L89 1 H145.6 V15.8" fill="#fff" stroke="#cfd0d8"/></svg>
<svg class="a" style="left:189px;top:362px" width="9" height="9" viewBox="0 0 9 9"><rect x="0.5" y="0.5" width="8" height="5" fill="none" stroke="#424242"/><path d="M0.5 7 H8.5 M2 8.5 H7" stroke="#424242"/></svg>
<div class="a t" style="left:199px;top:361.5px;font-size:8.6px;color:#1e1e1e">T-SQL</div>
<svg class="a" style="left:246px;top:362.5px" width="9" height="8" viewBox="0 0 9 8"><path d="M2 8 V1.2 M0.2 3.2 L2 0.8 L3.8 3.2 M6.8 0 V6.8 M5 4.8 L6.8 7.2 L8.6 4.8" stroke="#1e1e1e" stroke-width="1.3" fill="none"/></svg>
<svg class="a" style="left:276.5px;top:363px" width="8" height="10" viewBox="0 0 8 10"><path d="M0.5 0.5 H5.5 L7.5 2.5 V9.5 H0.5 Z" fill="#fff" stroke="#424242"/><path d="M2 4 H6 M2 6 H6 M2 8 H6" stroke="#424242"/></svg>
<div class="a t" style="left:287.5px;top:364px;font-size:8.8px;color:#1e1e1e">Mensaje</div>
<div class="a" style="left:503px;top:365.5px;width:37px;height:1px;background:#b8b8c0"></div>
<div class="a" style="left:503px;top:368px;width:37px;height:1px;background:#b8b8c0"></div>
<div class="a" style="left:720px;top:360px;width:10px;height:10px;border:1px solid #424242;background:#fff"></div>
<div class="a" style="left:724.5px;top:362px;width:1px;height:6px;background:#424242"></div>
<div class="a" style="left:731px;top:359px;width:11px;height:12px;background:#c5dcf0;border:1px solid #3399ff"></div>
<div class="a" style="left:732.5px;top:360.5px;width:8px;height:9px;border:1px solid #424242"></div>
<div class="a" style="left:733.5px;top:364.5px;width:6px;height:1px;background:#424242"></div>
<div class="a" style="left:743px;top:360px;width:10px;height:10px;border:1px solid #424242;background:#fff"></div>
<svg class="a" style="left:744.5px;top:361.5px" width="7" height="7" viewBox="0 0 7 7"><path d="M1 1 L3.5 3.5 L6 1 M1 3.5 L3.5 6 L6 3.5" stroke="#424242" fill="none"/></svg>
<!-- results body -->
<div class="a" style="left:177px;top:374px;width:577px;height:121px;background:#fff"></div>
<div class="a mono2" style="left:200.4px;top:374.5px">Comandos completados correctamente.</div>
<div class="a" style="left:741px;top:374px;width:13px;height:121px;background:#e8e8ec"></div>
<div class="a" style="left:744px;top:380px;width:0;height:0;border-style:solid;border-width:0 3.5px 3.5px;border-color:transparent transparent #a0a0a0"></div>
<div class="a" style="left:745.5px;top:387px;width:6.5px;height:100px;background:#d3d3d8"></div>
<!-- bottom zoom row -->
<div class="a" style="left:177px;top:495px;width:577px;height:12.5px;background:#e8e8ec"></div>
<div class="a" style="left:177px;top:495px;width:45px;height:12.5px;background:#fff"></div>
<div class="a t" style="left:180px;top:497.5px;font-size:8.2px;color:#1e1e1e">146 %</div>
<div class="a dd" style="left:215px;top:501.5px;border-width:2.5px 2.5px 0"></div>
<div class="a" style="left:229px;top:497px;width:1px;height:8px;background:#d0d0d0"></div>
<!-- query status strip -->
<div class="a" style="left:177px;top:507.5px;width:577px;height:16.5px;background:#34435f"></div>
<div class="a" style="left:179.5px;top:509.5px;width:12.5px;height:12.5px;border-radius:7px;background:#5fb85c;border:1px solid #e6f2e5"></div>
<svg class="a" style="left:182px;top:512px" width="8" height="8" viewBox="0 0 8 8"><path d="M1 4 L3.2 6.5 L7 1.2" stroke="#fff" stroke-width="1.5" fill="none"/></svg>
<div class="a t qs" style="left:195px;top:511px">Consulta  ejecutada...</div>
<div class="a" style="left:289.5px;top:510px;width:1.2px;height:11px;background:#fff"></div>
<div class="a t qs" style="left:294px;top:511px">(LocalDB)\MSSQLLocalDB (12....</div>
<div class="a" style="left:425px;top:510px;width:1.2px;height:11px;background:#fff"></div>
<div class="a t qs" style="left:429.5px;top:511px;font-size:8.25px">DESKTOP-AENS0J5\blo (58)</div>
<div class="a" style="left:543px;top:510px;width:1.2px;height:11px;background:#fff"></div>
<div class="a t qs" style="left:547.5px;top:511px">C:\USERS\BIO\DOCUMENTS\VISUAL</div>
<div class="a" style="left:177px;top:524px;width:577px;height:1px;background:#53627f"></div>

<!-- SOLUTION EXPLORER -->
<div class="a" style="left:759px;top:64.7px;width:260px;height:197px;background:#fff"></div>
<div class="a" style="left:759px;top:64.7px;width:260px;height:16.3px;background:#53627f"></div>
<div class="a t" style="left:762.5px;top:69.5px;font-size:8.7px;color:#fff">Explorador de soluciones</div>
<div class="a dd" style="left:983.2px;top:71px;border-top-color:#e9ecf2;border-width:2.6px 2.6px 0"></div>
<svg class="a" style="left:995.5px;top:68px" width="6" height="10" viewBox="0 0 6 10"><path d="M1.3 0.5 H4.7 V5.5 H1.3 Z M0 5.8 H6 M3 5.8 V9.5" stroke="#e9ecf2" fill="none" stroke-width="0.9"/><path d="M3.4 1 V5" stroke="#e9ecf2" stroke-width="0.8"/></svg>
<svg class="a" style="left:1007px;top:69px" width="7" height="7" viewBox="0 0 7 7"><path d="M0.5 0.5 L6.5 6.5 M6.5 0.5 L0.5 6.5" stroke="#e9ecf2" stroke-width="1.1"/></svg>
<div class="a" style="left:759px;top:81px;width:260px;height:21px;background:#d3d8e6"></div>
<div class="a" style="left:765.5px;top:87px;width:8.5px;height:8.5px;border-radius:5px;background:#c6cad3;border:1.5px solid #b9bdc6"></div>
<div class="a" style="left:781.5px;top:87px;width:8.5px;height:8.5px;border-radius:5px;background:#c6cad3;border:1.5px solid #b9bdc6"></div>
<svg class="a" style="left:797.5px;top:85.5px" width="11" height="11" viewBox="0 0 11 11"><path d="M0.5 5.5 L5.5 0.7 L10.5 5.5 M2 4.5 V10.3 H9 V4.5 M4.3 10.3 V7 H6.7 V10.3" stroke="#1e1e1e" stroke-width="1.1" fill="none"/></svg>
<div class="a" style="left:814.5px;top:84px;width:1px;height:16px;background:#b4bbcb"></div>
<svg class="a" style="left:822px;top:85px" width="12" height="12" viewBox="0 0 12 12"><path d="M0 0 H3 L1.5 2 Z" fill="#1e1e1e"/><circle cx="7" cy="7" r="4" fill="none" stroke="#1e1e1e" stroke-width="1.1"/><path d="M7 4.5 V7 H9" stroke="#1e1e1e" fill="none"/></svg>
<div class="a dd" style="left:837px;top:90px"></div>
<svg class="a" style="left:847.5px;top:86px" width="10" height="10" viewBox="0 0 10 10"><path d="M0 3 H8 M5.5 0.8 L8.5 3 L5.5 5.2 M10 7 H2 M4.5 4.8 L1.5 7 L4.5 9.2" stroke="#1e1e1e" stroke-width="1.3" fill="none"/></svg>
<svg class="a" style="left:862.5px;top:85px" width="11" height="12" viewBox="0 0 11 12"><path d="M8.5 4 A4 4 0 1 0 9 7.5" stroke="#1b5fa6" stroke-width="2" fill="none"/><path d="M6 1 L10 1.5 L9.5 5.5 Z" fill="#1b5fa6"/></svg>
<svg class="a" style="left:880.5px;top:86px" width="10" height="10" viewBox="0 0 10 10"><rect x="3" y="0.5" width="6.5" height="6" fill="none" stroke="#424242"/><rect x="0.5" y="3.5" width="6.5" height="6" fill="#d3d8e6" stroke="#424242"/></svg>
<svg class="a" style="left:896px;top:85px" width="11" height="12" viewBox="0 0 11 12"><rect x="0.5" y="0.5" width="7" height="8" fill="none" stroke="#6b6b6b"/><rect x="3" y="3" width="7.5" height="8.5" fill="#d3d8e6" stroke="#424242"/><circle cx="6.7" cy="7.2" r="2" fill="none" stroke="#424242"/></svg>
<div class="a" style="left:913px;top:84px;width:1px;height:16px;background:#b4bbcb"></div>
<svg class="a" style="left:919px;top:85.5px" width="11" height="11" viewBox="0 0 11 11"><path d="M1 10 L6 5" stroke="#1e1e1e" stroke-width="2.4" stroke-linecap="round"/><circle cx="7.5" cy="3.5" r="2.8" fill="#1e1e1e"/><path d="M7.5 0 L11 3.5 L8.5 3.5 Z" fill="#d3d8e6"/></svg>
<div class="a" style="left:933px;top:83px;width:16px;height:18px;background:#fbf1b8"></div>
<div class="a" style="left:935.5px;top:91.5px;width:11px;height:1.2px;background:#1e1e1e"></div>
<div class="a" style="left:940px;top:89.5px;width:6.5px;height:3.5px;background:#1e1e1e"></div>
<div class="a" style="left:759px;top:102px;width:260px;height:15px;background:#fff;border-bottom:1px solid #d3d8e6"></div>
<div class="a t" style="left:764px;top:105.5px;font-size:8.65px;color:#6d6d6d">Buscar en Explorador de soluciones (Ctrl+´)</div>
<svg class="a" style="left:998px;top:104.5px" width="11" height="11" viewBox="0 0 11 11"><circle cx="6.5" cy="4.5" r="3.2" fill="none" stroke="#1e1e1e" stroke-width="1.4"/><path d="M4.3 6.7 L1 10" stroke="#1e1e1e" stroke-width="1.8"/></svg>
<div class="a dd" style="left:1012px;top:110px"></div>
<!-- tree -->
<svg class="a" style="left:768px;top:122px" width="12" height="12" viewBox="0 0 12 12"><rect x="0.5" y="0.5" width="11" height="10" fill="#fff" stroke="#424242"/><rect x="0.5" y="0.5" width="11" height="2" fill="#424242"/><path d="M3 5 V9 H6" stroke="#1b5fa6" stroke-width="1.3" fill="none"/></svg>
<div class="a t row" style="left:784px;top:123.5px;font-size:9px">Solución 'Biblioteca'  (1 proyecto)</div>
<div class="a trd" style="left:767.5px;top:138px"></div>
<svg class="a" style="left:783px;top:136px" width="11" height="10" viewBox="0 0 11 10"><rect x="0.5" y="0.5" width="10" height="9" fill="#fff" stroke="#6b6b6b"/><text x="1.6" y="7.5" font-size="5.5" font-family="Liberation Sans" font-weight="bold" fill="#6b6b6b">VB</text></svg>
<div class="a t row" style="left:798px;top:137px;font-size:8.9px;font-weight:bold">Biblioteca</div>
<svg class="a" style="left:796px;top:150px" width="11" height="11" viewBox="0 0 11 11"><path d="M1 10 L6 5" stroke="#1e1e1e" stroke-width="2.4" stroke-linecap="round"/><circle cx="7.5" cy="3.5" r="2.8" fill="#1e1e1e"/><path d="M7.5 0 L11 3.5 L8.5 3.5 Z" fill="#fff"/></svg>
<div class="a t row" style="left:811px;top:150.8px;font-size:9px">My Project</div>
<svg class="a" style="left:782px;top:164.5px" width="5" height="8" viewBox="0 0 5 8"><path d="M0.5 0.5 L4.5 4 L0.5 7.5 Z" fill="none" stroke="#424242" stroke-width="1"/></svg>
<svg class="a" style="left:795px;top:165px" width="12" height="7" viewBox="0 0 12 7"><rect x="0" y="1.5" width="3" height="3" fill="#424242"/><rect x="7" y="0" width="5" height="6" fill="#1e1e1e"/><path d="M3 3 H7" stroke="#424242"/></svg>
<div class="a t row" style="left:811px;top:164px;font-size:9px">Referencias</div>
<svg class="a" style="left:796px;top:176px" width="11" height="12" viewBox="0 0 11 12"><path d="M3 0.5 H8 L10.5 3 V11.5 H3" fill="#fff" stroke="#424242"/><path d="M0.5 6 L3 3.5 M0.5 6 L3 8.5 M5 9 L7 4" stroke="#424242" fill="none"/></svg>
<div class="a t row" style="left:811px;top:177.5px;font-size:9px">App.config</div>
<div class="a" style="left:759px;top:189px;width:260px;height:13px;background:#dddddd"></div>
<svg class="a" style="left:797px;top:190px" width="9" height="11" viewBox="0 0 9 11"><path d="M0.5 2 V9.5 A4 1.5 0 0 0 8.5 9.5 V2" fill="#fff" stroke="#1e1e1e"/><ellipse cx="4.5" cy="2" rx="4" ry="1.5" fill="#fff" stroke="#1e1e1e"/><path d="M0.5 2 V9.5 H8.5 V2" fill="#424242"/></svg>
<div class="a t row" style="left:811px;top:191px;font-size:9px">Biblioteca.mdf</div>
<svg class="a" style="left:782px;top:205.5px" width="5" height="8" viewBox="0 0 5 8"><path d="M0.5 0.5 L4.5 4 L0.5 7.5 Z" fill="none" stroke="#424242" stroke-width="1"/></svg>
<svg class="a" style="left:795px;top:204px" width="12" height="10" viewBox="0 0 12 10"><rect x="0.5" y="0.5" width="11" height="9" fill="#fff" stroke="#424242"/><rect x="0.5" y="0.5" width="11" height="2" fill="#424242"/><path d="M2.5 5 H9.5 M2.5 7.5 H7" stroke="#424242"/></svg>
<div class="a t row" style="left:811px;top:205px;font-size:9px">Form1.vb</div>
<!-- bottom tabs -->
<div class="a" style="left:759px;top:247.3px;width:260px;height:14.7px;background:#303c59"></div>
<div class="a" style="left:759px;top:247.3px;width:106.5px;height:14.7px;background:#fff"></div>
<div class="a t" style="left:763.5px;top:249.8px;font-size:8.8px;color:#1e1e1e">Explorador de soluciones</div>
<div class="a" style="left:865.5px;top:247.3px;width:126.5px;height:14.7px;background:#53627f"></div>
<div class="a t" style="left:870px;top:250px;font-size:8.7px;color:#fff">Team Explorer</div>
<div class="a t" style="left:932px;top:250px;font-size:8.7px;color:#fff">Vista de clases</div>
<!-- PROPERTIES -->
<div class="a" style="left:759px;top:267.5px;width:260px;height:260px;background:#fff"></div>
<div class="a" style="left:759px;top:267.5px;width:260px;height:15.5px;background:#53627f"></div>
<div class="a t" style="left:762.5px;top:272px;font-size:8.7px;color:#fff">Propiedades</div>
<div class="a dd" style="left:983.2px;top:274px;border-top-color:#e9ecf2;border-width:2.6px 2.6px 0"></div>
<svg class="a" style="left:995.5px;top:271px" width="6" height="10" viewBox="0 0 6 10"><path d="M1.3 0.5 H4.7 V5.5 H1.3 Z M0 5.8 H6 M3 5.8 V9.5" stroke="#e9ecf2" fill="none" stroke-width="0.9"/><path d="M3.4 1 V5" stroke="#e9ecf2" stroke-width="0.8"/></svg>
<svg class="a" style="left:1007px;top:272px" width="7" height="7" viewBox="0 0 7 7"><path d="M0.5 0.5 L6.5 6.5 M6.5 0.5 L0.5 6.5" stroke="#e9ecf2" stroke-width="1.1"/></svg>
<div class="a t" style="left:768px;top:288px;font-size:8.85px;color:#1e1e1e;-webkit-text-stroke:0.1px #1e1e1e">Parámetros de la conexión actual</div>
<div class="a dd" style="left:1011px;top:291.5px"></div>
<div class="a" style="left:759px;top:301.5px;width:260px;height:19.5px;background:#d3d8e6"></div>
<svg class="a" style="left:764px;top:305px" width="12" height="11" viewBox="0 0 12 11"><rect x="0.5" y="0.5" width="4" height="4" fill="none" stroke="#424242"/><rect x="0.5" y="6.5" width="4" height="4" fill="none" stroke="#424242"/><path d="M6 1 H12 M6 3.5 H12 M6 7 H12 M6 9.5 H12" stroke="#6b6b6b"/><path d="M1.5 2.5 H3.5 M1.5 8.5 H3.5" stroke="#424242"/></svg>
<div class="a" style="left:778.5px;top:303.5px;width:19.5px;height:16.5px;background:#fdf4bf;border:1px solid #eedc9a"></div>
<svg class="a" style="left:782px;top:305px" width="13" height="13" viewBox="0 0 13 13"><text x="0" y="6" font-size="6.5" font-family="Liberation Sans" font-weight="bold" fill="#1e1e1e">A</text><text x="0" y="12.5" font-size="6.5" font-family="Liberation Sans" font-weight="bold" fill="#1e1e1e">Z</text><path d="M9.5 1 V10" stroke="#1b5fa6" stroke-width="1.6"/><path d="M6.5 8 L9.5 12 L12.5 8 Z" fill="#1b5fa6"/></svg>
<svg class="a" style="left:805px;top:306px" width="10" height="10" viewBox="0 0 11 11"><path d="M1 10 L6 5" stroke="#b9bec9" stroke-width="2.4" stroke-linecap="round"/><circle cx="7.5" cy="3.5" r="2.8" fill="#b9bec9"/><path d="M7.5 0 L11 3.5 L8.5 3.5 Z" fill="#d3d8e6"/></svg>
<div class="a" style="left:759px;top:321px;width:11.5px;height:206px;background:#f0f0f0"></div>
<div class="a" style="left:1005px;top:321px;width:14px;height:206px;background:#e8e8ec"></div>
<div class="a" style="left:1008.5px;top:326px;width:0;height:0;border-style:solid;border-width:0 3.5px 3.5px;border-color:transparent transparent #868686"></div>
<div class="a" style="left:1008.5px;top:334px;width:6px;height:110px;background:#d3d3d8"></div>
<div class="a" style="left:885.5px;top:321px;width:1px;height:206px;background:#f0f0f0"></div>
<div id="pgrid" class="a" style="left:770.5px;top:321px;width:234.5px">
<div class="pr"><span>Condición</span><span>Abierta</span></div>
<div class="pr"><span>Filas devueltas</span><span>0</span></div>
<div class="pr"><span>Hora de finalización</span><span>28/08/2016 07:27:13 a. m.</span></div>
<div class="pr"><span>Hora de inicio</span><span>28/08/2016 07:27:13 a. m.</span></div>
<div class="pr"><span>Id. de seguimiento de la sesión</span><span></span></div>
<div class="pr"><span>Nombre de conexión</span><span>(LocalDB)\MSSQLLocalDB  (DESKTOP</span></div>
<div class="pr"><span>Nombre de inicio de sesión</span><span>DESKTOP-AENS0J5\blo</span></div>
<div class="pr"><span>Nombre del servidor</span><span>(LocalDB)\MSSQLLocalDB</span></div>
<div class="pr" style="background:linear-gradient(90deg,#e2e2e2 0 115px,transparent 115px)"><span>Nombre para mostrar</span><span>(LocalDB)\MSSQLLocalDB</span></div>
</div>

<!-- STATUS BAR -->
<div class="a" style="left:0;top:529px;width:1024px;height:17.5px;background:#0a7bd2"></div>
<div class="a t" style="left:3px;top:533.5px;font-size:9.3px;color:#e6f2fa">Coincidencias: (</div>
<div class="a t sb" style="left:758.5px">Lín 38</div>
<div class="a t sb" style="left:828px">Col 34</div>
<div class="a t sb" style="left:896.5px">Car 34</div>
<div class="a t sb" style="left:999px">INS</div>
<!-- TASKBAR -->
<div class="a" style="left:0;top:546.5px;width:1024px;height:29.5px;background:#1f292b"></div>
<svg class="a" style="left:11.5px;top:555.5px" width="13" height="12" viewBox="0 0 13 12"><path d="M0 1.6 L5.5 0.8 V5.6 H0 Z M6.3 0.7 L13 0 V5.6 H6.3 Z M0 6.4 H5.5 V11.2 L0 10.4 Z M6.3 6.4 H13 V12 L6.3 11.3 Z" fill="#fff"/></svg>
<svg class="a" style="left:45px;top:557px" width="17" height="11" viewBox="0 0 17 11"><rect x="3.5" y="0.5" width="10" height="10" rx="1.5" fill="none" stroke="#e8e8e8" stroke-width="1.1"/><path d="M1 2 V9 M16 2 V9" stroke="#e8e8e8" stroke-width="1.1"/></svg>
<svg class="a" style="left:83px;top:555px" width="17" height="14" viewBox="0 0 17 14"><path d="M0 1 H6 L7.5 2.5 H17 V14 H0 Z" fill="#f0c85a"/><rect x="0" y="5" width="17" height="9" fill="#f8dc7a"/><rect x="5" y="8" width="7" height="4" fill="#3a9bd9"/></svg>
<div class="a" style="left:76px;top:574px;width:29px;height:2px;background:#8d9397"></div>
<div class="a" style="left:113px;top:547px;width:27px;height:29px;background:#476247"></div>
<div class="a" style="left:113px;top:574px;width:27px;height:2px;background:#6ab56a"></div>
<svg class="a" style="left:120px;top:552px" width="14" height="19" viewBox="0 0 14 19"><circle cx="5" cy="2.5" r="2" fill="#1a1a1a"/><path d="M3 5 H7 V19 H3 Z" fill="#111"/><path d="M0 5 L3 9" stroke="#ddd" stroke-width="1.5"/><rect x="8" y="8" width="5" height="5" fill="#b7aa88"/></svg>
<svg class="a" style="left:158px;top:555px" width="15" height="14" viewBox="0 0 15 14"><path d="M13.8 8 H4 C4.3 11 8 12.5 12.5 11 V13 C7 15 1 12.5 1 7.5 C1 2.5 5.5 0 9 0.3 C12.5 0.6 14.5 3.5 13.8 8 Z M4.1 5.8 H10.5 C10.3 3.8 9 2.8 7.4 2.8 C5.8 2.8 4.5 3.8 4.1 5.8 Z" fill="#1e8fe1" fill-rule="evenodd"/></svg>
<div class="a" style="left:150px;top:574px;width:29px;height:2px;background:#8d9397"></div>
<svg class="a" style="left:192px;top:554px" width="19" height="15" viewBox="0 0 19 15"><path d="M2 3 L10 1 L12 11 L4 13 Z" fill="#bfe08a"/><path d="M7 4 L17 3 L18 13 L8 14 Z" fill="#f5e27a"/></svg>
<div class="a" style="left:186px;top:574px;width:31px;height:2px;background:#8d9397"></div>
<svg class="a" style="left:229px;top:553px" width="17" height="18" viewBox="0 0 17 18"><rect x="2" y="1" width="14" height="11" fill="#dfe8f5" stroke="#5f7fb5"/><rect x="4" y="3" width="10" height="7" fill="#4a7fd0"/><path d="M0 8 L6 6 L8 12 L3 16 Z" fill="#9ab3d6"/><rect x="6" y="13" width="6" height="3" fill="#c9d1db"/></svg>
<div class="a" style="left:222px;top:574px;width:31px;height:2px;background:#8d9397"></div>
<div class="a" style="left:257px;top:547px;width:36px;height:29px;background:#3d4345"></div>
<div class="a" style="left:257px;top:574px;width:36px;height:2px;background:#a6aaad"></div>
<svg class="a" style="left:265px;top:552px" width="20" height="18" viewBox="0 0 17 15"><path d="M7 7.3 L3.3 4 Q1.4 3.4 1.4 5.2 V9.4 Q1.4 11.2 3.3 10.6 Z" fill="none" stroke="#a46fd6" stroke-width="1.7" stroke-linejoin="round"/><path d="M6.2 7.3 L11.3 0.3 L15.8 1.6 V13 L11.3 14.3 Z M11.6 4 L8.6 7.3 L11.6 10.6 Z" fill="#a46fd6" fill-rule="evenodd"/></svg>
<!-- tray -->
<div class="a" style="left:847px;top:549.5px;width:24px;height:24px;border-radius:12px;background:#1b8fd6;border:2px solid #f2f7fb"></div>
<div class="a t" style="left:853px;top:552px;font-size:17px;font-weight:bold;color:#fff">?</div>
<svg class="a" style="left:876px;top:558px" width="9" height="6" viewBox="0 0 9 6"><path d="M0.5 5.5 L4.5 1 L8.5 5.5" stroke="#e6e6e6" stroke-width="1.2" fill="none"/></svg>
<svg class="a" style="left:891px;top:556px" width="13" height="10" viewBox="0 0 13 10"><rect x="3" y="2" width="9.5" height="6" fill="#e6e6e6"/><path d="M0 1 L3 3 M0 5 H3" stroke="#e6e6e6"/></svg>
<svg class="a" style="left:909px;top:555px" width="14" height="12" viewBox="0 0 14 12"><path d="M0.5 4 H3 L6.5 1 V11 L3 8 H0.5 Z" fill="none" stroke="#e6e6e6"/><path d="M8.5 3.5 Q10 6 8.5 8.5 M10.5 2 Q13 6 10.5 10" stroke="#e6e6e6" fill="none"/></svg>
<svg class="a" style="left:928px;top:555px" width="12" height="12" viewBox="0 0 12 12"><circle cx="1.5" cy="1.5" r="1.3" fill="#e6e6e6"/><path d="M11 11 m-10 0 a10 10 0 0 1 10 -10 M11 11 m-7 0 a7 7 0 0 1 7 -7 M11 11 m-4 0 a4 4 0 0 1 4 -4" stroke="#8d9396" stroke-width="1.1" fill="none"/><circle cx="10.5" cy="10.5" r="1.2" fill="#e6e6e6"/></svg>
<svg class="a" style="left:945px;top:554px" width="14" height="14" viewBox="0 0 14 14"><path d="M0.5 0.5 H12 V7 M0.5 0.5 V12.5 H7" stroke="#e6e6e6" fill="none"/><path d="M3 3.5 H9.5 M3 6 H9.5 M3 8.5 H6" stroke="#e6e6e6"/><circle cx="10" cy="10.5" r="3" fill="none" stroke="#e6e6e6"/></svg>
<div class="a t" style="left:968.5px;top:550px;font-size:8.5px;color:#f2f2f2">07:32 a. m.</div>
<div class="a t" style="left:968.5px;top:563px;font-size:8.7px;color:#f2f2f2">28/08/2016</div>
<!-- CAMTASIA RECORDER -->
<div class="a" style="left:641.5px;top:443px;width:374.3px;height:89.8px;background:#141414;border-radius:3px 3px 0 0;box-shadow:0 0 1px #000"></div>
<div class="a" style="left:641.5px;top:443px;width:374.3px;height:15.5px;background:linear-gradient(#d0d0d0,#b4b4b4);border-radius:3px 3px 0 0"></div>
<div class="a t cm" style="left:647px">Capture</div>
<div class="a t cm" style="left:690.5px">Effects</div>
<div class="a t cm" style="left:729px">Tools</div>
<div class="a t cm" style="left:761.5px">Help</div>
<div class="a" style="left:988.5px;top:449.8px;width:5px;height:1.6px;background:#222"></div>
<svg class="a" style="left:1004.5px;top:447px" width="7" height="7" viewBox="0 0 7 7"><path d="M0.5 0.5 L6.5 6.5 M6.5 0.5 L0.5 6.5" stroke="#222" stroke-width="1.6"/></svg>
<div class="a" style="left:649.3px;top:463.7px;width:154.3px;height:61.2px;background:#1c1c1c;border:1px solid #2c2c2c;border-radius:4px"></div>
<div class="a" style="left:650.3px;top:479px;width:152.3px;height:1px;background:#2b2b2b"></div>
<div class="a t" style="left:710.5px;top:468.5px;font-size:8.2px;color:#cfcfcf">Duration</div>
<div class="a" style="left:654.2px;top:483.9px;width:144px;height:35.1px;border-radius:4px;background:linear-gradient(#6a6a6a,#4a4a4a 45%,#383838)"></div>
<div class="a t" style="left:673px;top:484.5px;font-size:33px;color:#f4f4f4;letter-spacing:0.1px;-webkit-text-stroke:0">0:11:57</div>
<div class="a" style="left:808.6px;top:464.7px;width:84.8px;height:60.1px;background:#1c1c1c;border:1px solid #2c2c2c;border-radius:4px"></div>
<div class="a" style="left:809.6px;top:479px;width:82.8px;height:1px;background:#2b2b2b"></div>
<div class="a t" style="left:840.5px;top:468.5px;font-size:8.2px;color:#cfcfcf">Audio</div>
<svg class="a" style="left:820px;top:490px" width="64" height="20" viewBox="0 0 64 20"><defs><linearGradient id="mg2" x1="0" x2="1"><stop offset="0" stop-color="#5fd12f"/><stop offset="0.5" stop-color="#e8d23a"/><stop offset="1" stop-color="#f08a1e"/></linearGradient></defs><path d="M2.5 11 L60 3 V16.5 H2.5 Z" fill="#d8d8d8"/><rect x="2.5" y="11" width="49" height="5.5" fill="url(#mg2)"/><path d="M4 1.5 V11 M31 1.5 V8 M58 1.5 V4" stroke="#9a9a9a" stroke-width="0.8"/><rect x="48" y="7" width="7" height="10.5" rx="2.5" fill="#a9d3ef" stroke="#5ea0d0" stroke-width="0.8"/><rect x="55" y="11" width="6" height="5.5" fill="#f4f4f4"/></svg>
<svg class="a" style="left:895px;top:470px" width="40" height="40" viewBox="0 0 40 40"><defs><linearGradient id="dg2" x1="0" y1="0" x2="0" y2="1"><stop offset="0" stop-color="#c4c4c4"/><stop offset="1" stop-color="#8a8a8a"/></linearGradient></defs><circle cx="20.8" cy="20.3" r="12.8" fill="url(#dg2)"/><path d="M20.8 20.3 L5.5 11.5 L10 6.5 Z" fill="#141414"/><circle cx="20.8" cy="20.3" r="6" fill="#141414"/><path d="M6 12.5 L17 16.5 L9 26.5 Z" fill="url(#dg2)"/><path d="M12.5 21.5 L17.5 17" stroke="#141414" stroke-width="1"/></svg>
<div class="a t cl" style="left:902.5px">Delete</div>
<div class="a" style="left:944px;top:476.5px;width:6.5px;height:27.5px;background:linear-gradient(90deg,#8c8c8c,#cfcfcf,#8c8c8c)"></div>
<div class="a" style="left:955px;top:476.5px;width:6.5px;height:27.5px;background:linear-gradient(90deg,#8c8c8c,#cfcfcf,#8c8c8c)"></div>
<div class="a t cl" style="left:941.5px">Pause</div>
<div class="a" style="left:978px;top:476.5px;width:27px;height:27.5px;background:linear-gradient(160deg,#bdbdbd,#9a9a9a 50%,#7d7d7d)"></div>
<div class="a t cl" style="left:983.5px">Stop</div>

</div></body></html>
